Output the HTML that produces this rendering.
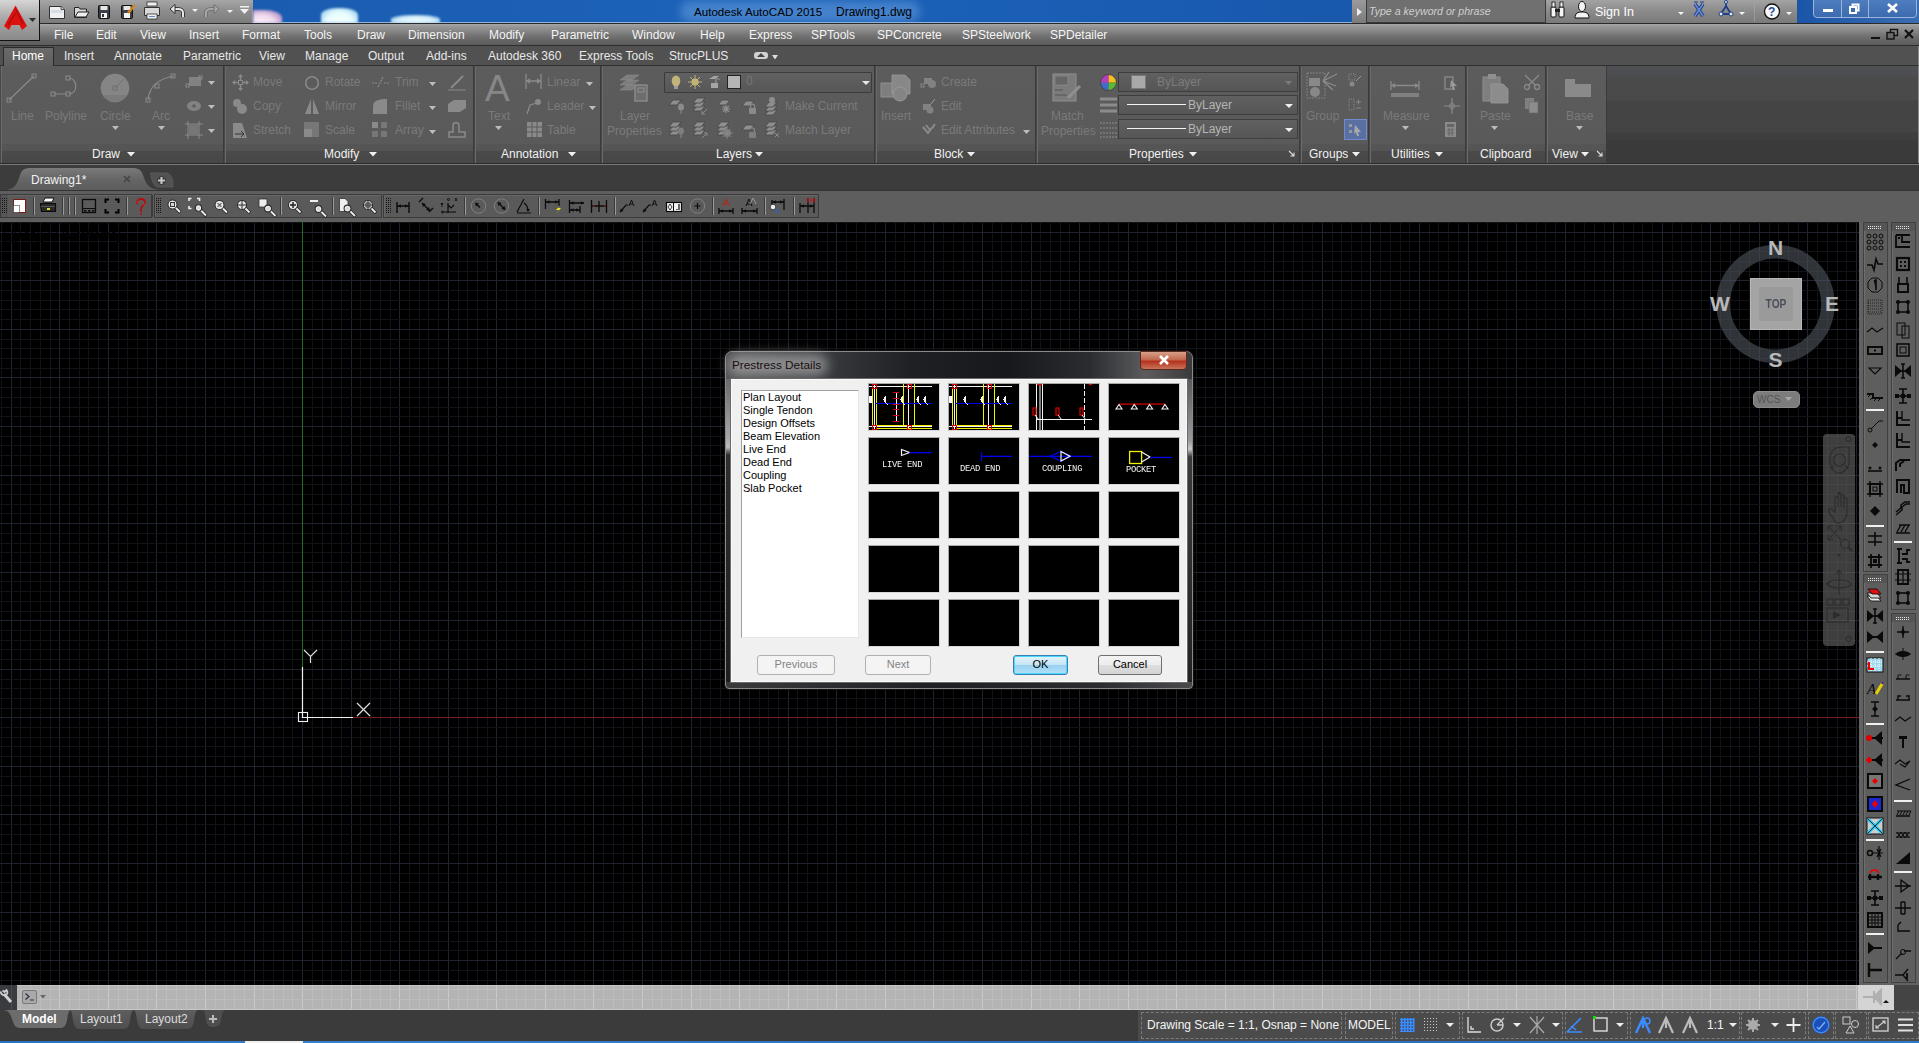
<!DOCTYPE html><html><head><meta charset="utf-8"><title>AutoCAD</title><style>
*{margin:0;padding:0;box-sizing:border-box}
html,body{width:1919px;height:1043px;overflow:hidden;background:#000}
body{position:relative;font-family:"Liberation Sans",sans-serif;font-size:12px;color:#fff}
.a{position:absolute}
.t{position:absolute;white-space:nowrap;line-height:1}
svg{position:absolute;overflow:visible}
</style></head><body>
<svg style="left:0;top:222px" width="1859" height="763" shape-rendering="crispEdges"><rect x="1" y="0" width="1" height="763" fill="#111318"/><rect x="11" y="0" width="1" height="763" fill="#1f2330"/><rect x="20" y="0" width="1" height="763" fill="#111318"/><rect x="30" y="0" width="1" height="763" fill="#111318"/><rect x="40" y="0" width="1" height="763" fill="#111318"/><rect x="50" y="0" width="1" height="763" fill="#111318"/><rect x="59" y="0" width="1" height="763" fill="#1f2330"/><rect x="69" y="0" width="1" height="763" fill="#111318"/><rect x="79" y="0" width="1" height="763" fill="#111318"/><rect x="88" y="0" width="1" height="763" fill="#111318"/><rect x="98" y="0" width="1" height="763" fill="#111318"/><rect x="108" y="0" width="1" height="763" fill="#1f2330"/><rect x="118" y="0" width="1" height="763" fill="#111318"/><rect x="127" y="0" width="1" height="763" fill="#111318"/><rect x="137" y="0" width="1" height="763" fill="#111318"/><rect x="147" y="0" width="1" height="763" fill="#111318"/><rect x="156" y="0" width="1" height="763" fill="#1f2330"/><rect x="166" y="0" width="1" height="763" fill="#111318"/><rect x="176" y="0" width="1" height="763" fill="#111318"/><rect x="186" y="0" width="1" height="763" fill="#111318"/><rect x="195" y="0" width="1" height="763" fill="#111318"/><rect x="205" y="0" width="1" height="763" fill="#1f2330"/><rect x="215" y="0" width="1" height="763" fill="#111318"/><rect x="224" y="0" width="1" height="763" fill="#111318"/><rect x="234" y="0" width="1" height="763" fill="#111318"/><rect x="244" y="0" width="1" height="763" fill="#111318"/><rect x="254" y="0" width="1" height="763" fill="#1f2330"/><rect x="263" y="0" width="1" height="763" fill="#111318"/><rect x="273" y="0" width="1" height="763" fill="#111318"/><rect x="283" y="0" width="1" height="763" fill="#111318"/><rect x="292" y="0" width="1" height="763" fill="#111318"/><rect x="302" y="0" width="1" height="763" fill="#1f2330"/><rect x="312" y="0" width="1" height="763" fill="#111318"/><rect x="322" y="0" width="1" height="763" fill="#111318"/><rect x="331" y="0" width="1" height="763" fill="#111318"/><rect x="341" y="0" width="1" height="763" fill="#111318"/><rect x="351" y="0" width="1" height="763" fill="#1f2330"/><rect x="360" y="0" width="1" height="763" fill="#111318"/><rect x="370" y="0" width="1" height="763" fill="#111318"/><rect x="380" y="0" width="1" height="763" fill="#111318"/><rect x="390" y="0" width="1" height="763" fill="#111318"/><rect x="399" y="0" width="1" height="763" fill="#1f2330"/><rect x="409" y="0" width="1" height="763" fill="#111318"/><rect x="419" y="0" width="1" height="763" fill="#111318"/><rect x="428" y="0" width="1" height="763" fill="#111318"/><rect x="438" y="0" width="1" height="763" fill="#111318"/><rect x="448" y="0" width="1" height="763" fill="#1f2330"/><rect x="458" y="0" width="1" height="763" fill="#111318"/><rect x="467" y="0" width="1" height="763" fill="#111318"/><rect x="477" y="0" width="1" height="763" fill="#111318"/><rect x="487" y="0" width="1" height="763" fill="#111318"/><rect x="496" y="0" width="1" height="763" fill="#1f2330"/><rect x="506" y="0" width="1" height="763" fill="#111318"/><rect x="516" y="0" width="1" height="763" fill="#111318"/><rect x="525" y="0" width="1" height="763" fill="#111318"/><rect x="535" y="0" width="1" height="763" fill="#111318"/><rect x="545" y="0" width="1" height="763" fill="#1f2330"/><rect x="555" y="0" width="1" height="763" fill="#111318"/><rect x="564" y="0" width="1" height="763" fill="#111318"/><rect x="574" y="0" width="1" height="763" fill="#111318"/><rect x="584" y="0" width="1" height="763" fill="#111318"/><rect x="593" y="0" width="1" height="763" fill="#1f2330"/><rect x="603" y="0" width="1" height="763" fill="#111318"/><rect x="613" y="0" width="1" height="763" fill="#111318"/><rect x="623" y="0" width="1" height="763" fill="#111318"/><rect x="632" y="0" width="1" height="763" fill="#111318"/><rect x="642" y="0" width="1" height="763" fill="#1f2330"/><rect x="652" y="0" width="1" height="763" fill="#111318"/><rect x="661" y="0" width="1" height="763" fill="#111318"/><rect x="671" y="0" width="1" height="763" fill="#111318"/><rect x="681" y="0" width="1" height="763" fill="#111318"/><rect x="691" y="0" width="1" height="763" fill="#1f2330"/><rect x="700" y="0" width="1" height="763" fill="#111318"/><rect x="710" y="0" width="1" height="763" fill="#111318"/><rect x="720" y="0" width="1" height="763" fill="#111318"/><rect x="729" y="0" width="1" height="763" fill="#111318"/><rect x="739" y="0" width="1" height="763" fill="#1f2330"/><rect x="749" y="0" width="1" height="763" fill="#111318"/><rect x="759" y="0" width="1" height="763" fill="#111318"/><rect x="768" y="0" width="1" height="763" fill="#111318"/><rect x="778" y="0" width="1" height="763" fill="#111318"/><rect x="788" y="0" width="1" height="763" fill="#1f2330"/><rect x="797" y="0" width="1" height="763" fill="#111318"/><rect x="807" y="0" width="1" height="763" fill="#111318"/><rect x="817" y="0" width="1" height="763" fill="#111318"/><rect x="827" y="0" width="1" height="763" fill="#111318"/><rect x="836" y="0" width="1" height="763" fill="#1f2330"/><rect x="846" y="0" width="1" height="763" fill="#111318"/><rect x="856" y="0" width="1" height="763" fill="#111318"/><rect x="865" y="0" width="1" height="763" fill="#111318"/><rect x="875" y="0" width="1" height="763" fill="#111318"/><rect x="885" y="0" width="1" height="763" fill="#1f2330"/><rect x="895" y="0" width="1" height="763" fill="#111318"/><rect x="904" y="0" width="1" height="763" fill="#111318"/><rect x="914" y="0" width="1" height="763" fill="#111318"/><rect x="924" y="0" width="1" height="763" fill="#111318"/><rect x="933" y="0" width="1" height="763" fill="#1f2330"/><rect x="943" y="0" width="1" height="763" fill="#111318"/><rect x="953" y="0" width="1" height="763" fill="#111318"/><rect x="963" y="0" width="1" height="763" fill="#111318"/><rect x="972" y="0" width="1" height="763" fill="#111318"/><rect x="982" y="0" width="1" height="763" fill="#1f2330"/><rect x="992" y="0" width="1" height="763" fill="#111318"/><rect x="1001" y="0" width="1" height="763" fill="#111318"/><rect x="1011" y="0" width="1" height="763" fill="#111318"/><rect x="1021" y="0" width="1" height="763" fill="#111318"/><rect x="1031" y="0" width="1" height="763" fill="#1f2330"/><rect x="1040" y="0" width="1" height="763" fill="#111318"/><rect x="1050" y="0" width="1" height="763" fill="#111318"/><rect x="1060" y="0" width="1" height="763" fill="#111318"/><rect x="1069" y="0" width="1" height="763" fill="#111318"/><rect x="1079" y="0" width="1" height="763" fill="#1f2330"/><rect x="1089" y="0" width="1" height="763" fill="#111318"/><rect x="1099" y="0" width="1" height="763" fill="#111318"/><rect x="1108" y="0" width="1" height="763" fill="#111318"/><rect x="1118" y="0" width="1" height="763" fill="#111318"/><rect x="1128" y="0" width="1" height="763" fill="#1f2330"/><rect x="1137" y="0" width="1" height="763" fill="#111318"/><rect x="1147" y="0" width="1" height="763" fill="#111318"/><rect x="1157" y="0" width="1" height="763" fill="#111318"/><rect x="1166" y="0" width="1" height="763" fill="#111318"/><rect x="1176" y="0" width="1" height="763" fill="#1f2330"/><rect x="1186" y="0" width="1" height="763" fill="#111318"/><rect x="1196" y="0" width="1" height="763" fill="#111318"/><rect x="1205" y="0" width="1" height="763" fill="#111318"/><rect x="1215" y="0" width="1" height="763" fill="#111318"/><rect x="1225" y="0" width="1" height="763" fill="#1f2330"/><rect x="1234" y="0" width="1" height="763" fill="#111318"/><rect x="1244" y="0" width="1" height="763" fill="#111318"/><rect x="1254" y="0" width="1" height="763" fill="#111318"/><rect x="1264" y="0" width="1" height="763" fill="#111318"/><rect x="1273" y="0" width="1" height="763" fill="#1f2330"/><rect x="1283" y="0" width="1" height="763" fill="#111318"/><rect x="1293" y="0" width="1" height="763" fill="#111318"/><rect x="1302" y="0" width="1" height="763" fill="#111318"/><rect x="1312" y="0" width="1" height="763" fill="#111318"/><rect x="1322" y="0" width="1" height="763" fill="#1f2330"/><rect x="1332" y="0" width="1" height="763" fill="#111318"/><rect x="1341" y="0" width="1" height="763" fill="#111318"/><rect x="1351" y="0" width="1" height="763" fill="#111318"/><rect x="1361" y="0" width="1" height="763" fill="#111318"/><rect x="1370" y="0" width="1" height="763" fill="#1f2330"/><rect x="1380" y="0" width="1" height="763" fill="#111318"/><rect x="1390" y="0" width="1" height="763" fill="#111318"/><rect x="1400" y="0" width="1" height="763" fill="#111318"/><rect x="1409" y="0" width="1" height="763" fill="#111318"/><rect x="1419" y="0" width="1" height="763" fill="#1f2330"/><rect x="1429" y="0" width="1" height="763" fill="#111318"/><rect x="1438" y="0" width="1" height="763" fill="#111318"/><rect x="1448" y="0" width="1" height="763" fill="#111318"/><rect x="1458" y="0" width="1" height="763" fill="#111318"/><rect x="1468" y="0" width="1" height="763" fill="#1f2330"/><rect x="1477" y="0" width="1" height="763" fill="#111318"/><rect x="1487" y="0" width="1" height="763" fill="#111318"/><rect x="1497" y="0" width="1" height="763" fill="#111318"/><rect x="1506" y="0" width="1" height="763" fill="#111318"/><rect x="1516" y="0" width="1" height="763" fill="#1f2330"/><rect x="1526" y="0" width="1" height="763" fill="#111318"/><rect x="1536" y="0" width="1" height="763" fill="#111318"/><rect x="1545" y="0" width="1" height="763" fill="#111318"/><rect x="1555" y="0" width="1" height="763" fill="#111318"/><rect x="1565" y="0" width="1" height="763" fill="#1f2330"/><rect x="1574" y="0" width="1" height="763" fill="#111318"/><rect x="1584" y="0" width="1" height="763" fill="#111318"/><rect x="1594" y="0" width="1" height="763" fill="#111318"/><rect x="1604" y="0" width="1" height="763" fill="#111318"/><rect x="1613" y="0" width="1" height="763" fill="#1f2330"/><rect x="1623" y="0" width="1" height="763" fill="#111318"/><rect x="1633" y="0" width="1" height="763" fill="#111318"/><rect x="1642" y="0" width="1" height="763" fill="#111318"/><rect x="1652" y="0" width="1" height="763" fill="#111318"/><rect x="1662" y="0" width="1" height="763" fill="#1f2330"/><rect x="1672" y="0" width="1" height="763" fill="#111318"/><rect x="1681" y="0" width="1" height="763" fill="#111318"/><rect x="1691" y="0" width="1" height="763" fill="#111318"/><rect x="1701" y="0" width="1" height="763" fill="#111318"/><rect x="1710" y="0" width="1" height="763" fill="#1f2330"/><rect x="1720" y="0" width="1" height="763" fill="#111318"/><rect x="1730" y="0" width="1" height="763" fill="#111318"/><rect x="1739" y="0" width="1" height="763" fill="#111318"/><rect x="1749" y="0" width="1" height="763" fill="#111318"/><rect x="1759" y="0" width="1" height="763" fill="#1f2330"/><rect x="1769" y="0" width="1" height="763" fill="#111318"/><rect x="1778" y="0" width="1" height="763" fill="#111318"/><rect x="1788" y="0" width="1" height="763" fill="#111318"/><rect x="1798" y="0" width="1" height="763" fill="#111318"/><rect x="1807" y="0" width="1" height="763" fill="#1f2330"/><rect x="1817" y="0" width="1" height="763" fill="#111318"/><rect x="1827" y="0" width="1" height="763" fill="#111318"/><rect x="1837" y="0" width="1" height="763" fill="#111318"/><rect x="1846" y="0" width="1" height="763" fill="#111318"/><rect x="1856" y="0" width="1" height="763" fill="#1f2330"/><rect x="0" y="0" width="1859" height="1" fill="#111318"/><rect x="0" y="10" width="1859" height="1" fill="#1f2330"/><rect x="0" y="19" width="1859" height="1" fill="#111318"/><rect x="0" y="29" width="1859" height="1" fill="#111318"/><rect x="0" y="39" width="1859" height="1" fill="#111318"/><rect x="0" y="49" width="1859" height="1" fill="#111318"/><rect x="0" y="58" width="1859" height="1" fill="#1f2330"/><rect x="0" y="68" width="1859" height="1" fill="#111318"/><rect x="0" y="78" width="1859" height="1" fill="#111318"/><rect x="0" y="87" width="1859" height="1" fill="#111318"/><rect x="0" y="97" width="1859" height="1" fill="#111318"/><rect x="0" y="107" width="1859" height="1" fill="#1f2330"/><rect x="0" y="117" width="1859" height="1" fill="#111318"/><rect x="0" y="126" width="1859" height="1" fill="#111318"/><rect x="0" y="136" width="1859" height="1" fill="#111318"/><rect x="0" y="146" width="1859" height="1" fill="#111318"/><rect x="0" y="155" width="1859" height="1" fill="#1f2330"/><rect x="0" y="165" width="1859" height="1" fill="#111318"/><rect x="0" y="175" width="1859" height="1" fill="#111318"/><rect x="0" y="185" width="1859" height="1" fill="#111318"/><rect x="0" y="194" width="1859" height="1" fill="#111318"/><rect x="0" y="204" width="1859" height="1" fill="#1f2330"/><rect x="0" y="214" width="1859" height="1" fill="#111318"/><rect x="0" y="223" width="1859" height="1" fill="#111318"/><rect x="0" y="233" width="1859" height="1" fill="#111318"/><rect x="0" y="243" width="1859" height="1" fill="#111318"/><rect x="0" y="253" width="1859" height="1" fill="#1f2330"/><rect x="0" y="262" width="1859" height="1" fill="#111318"/><rect x="0" y="272" width="1859" height="1" fill="#111318"/><rect x="0" y="282" width="1859" height="1" fill="#111318"/><rect x="0" y="291" width="1859" height="1" fill="#111318"/><rect x="0" y="301" width="1859" height="1" fill="#1f2330"/><rect x="0" y="311" width="1859" height="1" fill="#111318"/><rect x="0" y="321" width="1859" height="1" fill="#111318"/><rect x="0" y="330" width="1859" height="1" fill="#111318"/><rect x="0" y="340" width="1859" height="1" fill="#111318"/><rect x="0" y="350" width="1859" height="1" fill="#1f2330"/><rect x="0" y="359" width="1859" height="1" fill="#111318"/><rect x="0" y="369" width="1859" height="1" fill="#111318"/><rect x="0" y="379" width="1859" height="1" fill="#111318"/><rect x="0" y="389" width="1859" height="1" fill="#111318"/><rect x="0" y="398" width="1859" height="1" fill="#1f2330"/><rect x="0" y="408" width="1859" height="1" fill="#111318"/><rect x="0" y="418" width="1859" height="1" fill="#111318"/><rect x="0" y="427" width="1859" height="1" fill="#111318"/><rect x="0" y="437" width="1859" height="1" fill="#111318"/><rect x="0" y="447" width="1859" height="1" fill="#1f2330"/><rect x="0" y="457" width="1859" height="1" fill="#111318"/><rect x="0" y="466" width="1859" height="1" fill="#111318"/><rect x="0" y="476" width="1859" height="1" fill="#111318"/><rect x="0" y="486" width="1859" height="1" fill="#111318"/><rect x="0" y="495" width="1859" height="1" fill="#1f2330"/><rect x="0" y="505" width="1859" height="1" fill="#111318"/><rect x="0" y="515" width="1859" height="1" fill="#111318"/><rect x="0" y="524" width="1859" height="1" fill="#111318"/><rect x="0" y="534" width="1859" height="1" fill="#111318"/><rect x="0" y="544" width="1859" height="1" fill="#1f2330"/><rect x="0" y="554" width="1859" height="1" fill="#111318"/><rect x="0" y="563" width="1859" height="1" fill="#111318"/><rect x="0" y="573" width="1859" height="1" fill="#111318"/><rect x="0" y="583" width="1859" height="1" fill="#111318"/><rect x="0" y="592" width="1859" height="1" fill="#1f2330"/><rect x="0" y="602" width="1859" height="1" fill="#111318"/><rect x="0" y="612" width="1859" height="1" fill="#111318"/><rect x="0" y="622" width="1859" height="1" fill="#111318"/><rect x="0" y="631" width="1859" height="1" fill="#111318"/><rect x="0" y="641" width="1859" height="1" fill="#1f2330"/><rect x="0" y="651" width="1859" height="1" fill="#111318"/><rect x="0" y="660" width="1859" height="1" fill="#111318"/><rect x="0" y="670" width="1859" height="1" fill="#111318"/><rect x="0" y="680" width="1859" height="1" fill="#111318"/><rect x="0" y="690" width="1859" height="1" fill="#1f2330"/><rect x="0" y="699" width="1859" height="1" fill="#111318"/><rect x="0" y="709" width="1859" height="1" fill="#111318"/><rect x="0" y="719" width="1859" height="1" fill="#111318"/><rect x="0" y="728" width="1859" height="1" fill="#111318"/><rect x="0" y="738" width="1859" height="1" fill="#1f2330"/><rect x="0" y="748" width="1859" height="1" fill="#111318"/><rect x="0" y="758" width="1859" height="1" fill="#111318"/><rect x="302" y="0" width="1" height="495" fill="#1f6e1f"/><rect x="302" y="495" width="1557" height="1" fill="#7a1a1a"/></svg>
<div class="t" style="left:3px;top:229px;font-size:12px;color:#000">[-][Top][2D Wireframe]</div>
<svg style="left:290px;top:640px" width="90" height="90"><path d="M12.5 27V77.5H63" stroke="#f0f0f0" stroke-width="1.2" fill="none"/><rect x="8.5" y="72.5" width="9" height="9" fill="none" stroke="#f0f0f0" stroke-width="1.1"/><path d="M14 10L20.5 16.5L27 10M20.5 16.5V23" stroke="#e0e0e0" stroke-width="1.2" fill="none"/><path d="M67 63L80 76M80 63L67 76" stroke="#e0e0e0" stroke-width="1.2"/></svg>
<svg style="left:1700px;top:228px" width="152" height="152"><circle cx="75.5" cy="76" r="52.4" fill="none" stroke="rgba(78,82,90,.62)" stroke-width="13.6"/></svg>
<div class="a" style="left:1750px;top:278px;width:52px;height:52px;background:#a4a4a4;border:1px solid #b8b8b8"></div>
<div class="a" style="left:1759px;top:287px;width:34px;height:34px;background:#9a9a9a"></div>
<div class="t" style="left:1750px;top:298px;width:52px;text-align:center;font-size:12px;font-weight:bold;color:#4a4f5a;transform:scaleX(.85)">TOP</div>
<div class="t" style="left:1765.5px;top:236.5px;width:20px;text-align:center;font-size:21px;font-weight:bold;color:#b8b8b8">N</div>
<div class="t" style="left:1710px;top:292.5px;width:20px;text-align:center;font-size:21px;font-weight:bold;color:#b8b8b8">W</div>
<div class="t" style="left:1822px;top:292.5px;width:20px;text-align:center;font-size:21px;font-weight:bold;color:#b8b8b8">E</div>
<div class="t" style="left:1765.5px;top:348.5px;width:20px;text-align:center;font-size:21px;font-weight:bold;color:#b8b8b8">S</div>
<div class="a" style="left:1753px;top:391px;width:47px;height:17px;border-radius:5px;background:#7c7c7c;border:1px solid #8c8c8c"></div>
<div class="t" style="left:1757px;top:395px;font-size:10px;color:#555">WCS</div>
<svg style="left:1785px;top:397px" width="7" height="5"><path d="M0 0H7L3.5 4Z" fill="#a8a8a8"/></svg>
<div class="a" style="left:1823px;top:434px;width:32px;height:212px;border-radius:4px;background:rgba(100,100,100,.62)"></div>
<svg style="left:1823px;top:434px" width="32" height="212"><g fill="none" stroke="#262626" stroke-width="1.1" opacity=".75"><circle cx="25.5" cy="5" r="2.5"/><path d="M7 26C7 16 12 13 19 13H26V27C26 34 21 39 16 39C11 39 7 34 7 26Z"/><circle cx="16.5" cy="26" r="6"/><path d="M11 31L8 35M22 31L25 35"/><path d="M10 84C7 80 4 77 6 75C8 74 10 76 12 78V64C12 62 15 62 15 64V73V61C15 59 18 59 18 61V73V62C18 60 21 60 21 62V74V65C21 63 24 63 24 65V78C24 85 20 89 15 89C12 89 11 87 10 84Z"/><path d="M5 92L18 106M18 92L5 106M5 92V97M5 92H10M5 106V101M5 106H10M18 92H13M18 92V97"/><circle cx="22" cy="110" r="4.5"/><path d="M25 113L29 117" stroke-width="2"/><path d="M16 136V161M16 136L13 140M16 136L19 140"/><ellipse cx="16" cy="150" rx="12" ry="4"/><path d="M4 150L8 147M4 150L8 153"/><rect x="4" y="165" width="6" height="6"/><rect x="12" y="165" width="6" height="6"/><rect x="20" y="165" width="6" height="6"/><rect x="4" y="174" width="21" height="14"/><circle cx="25.5" cy="205" r="2.5"/></g><g fill="#262626" opacity=".75"><path d="M14 58L16 61L18 58Z"/><path d="M14 120L16 123L18 120Z"/><path d="M14 143L16 146L18 143Z" opacity="0"/><path d="M14 176L16 179L18 176Z" opacity="0"/><path d="M10 177L18 181L10 185Z"/><path d="M14 160L16 163L18 160Z" opacity="0"/></g></svg>
<div class="a" style="left:1859px;top:222px;width:60px;height:763px;background:#626262"></div>
<div class="a" style="left:1863px;top:222px;width:25px;height:350px;background:#5e5e5e;border:1px solid #404040;box-shadow:inset 1px 1px 0 #6e6e6e"></div>
<div class="a" style="left:1864px;top:223px;width:23px;height:8px;background:#555"></div>
<svg style="left:1868px;top:225px" width="16" height="5"><rect x="0" y="1" width="1" height="1" fill="#e8e8e8"/><rect x="0" y="3" width="1" height="1" fill="#e8e8e8"/><rect x="2" y="1" width="1" height="1" fill="#e8e8e8"/><rect x="2" y="3" width="1" height="1" fill="#e8e8e8"/><rect x="4" y="1" width="1" height="1" fill="#e8e8e8"/><rect x="4" y="3" width="1" height="1" fill="#e8e8e8"/><rect x="6" y="1" width="1" height="1" fill="#e8e8e8"/><rect x="6" y="3" width="1" height="1" fill="#e8e8e8"/><rect x="8" y="1" width="1" height="1" fill="#e8e8e8"/><rect x="8" y="3" width="1" height="1" fill="#e8e8e8"/><rect x="10" y="1" width="1" height="1" fill="#e8e8e8"/><rect x="10" y="3" width="1" height="1" fill="#e8e8e8"/><rect x="12" y="1" width="1" height="1" fill="#e8e8e8"/><rect x="12" y="3" width="1" height="1" fill="#e8e8e8"/></svg>
<div class="a" style="left:1863px;top:574px;width:25px;height:409px;background:#5e5e5e;border:1px solid #404040;box-shadow:inset 1px 1px 0 #6e6e6e"></div>
<div class="a" style="left:1864px;top:575px;width:23px;height:8px;background:#555"></div>
<svg style="left:1868px;top:577px" width="16" height="5"><rect x="0" y="1" width="1" height="1" fill="#e8e8e8"/><rect x="0" y="3" width="1" height="1" fill="#e8e8e8"/><rect x="2" y="1" width="1" height="1" fill="#e8e8e8"/><rect x="2" y="3" width="1" height="1" fill="#e8e8e8"/><rect x="4" y="1" width="1" height="1" fill="#e8e8e8"/><rect x="4" y="3" width="1" height="1" fill="#e8e8e8"/><rect x="6" y="1" width="1" height="1" fill="#e8e8e8"/><rect x="6" y="3" width="1" height="1" fill="#e8e8e8"/><rect x="8" y="1" width="1" height="1" fill="#e8e8e8"/><rect x="8" y="3" width="1" height="1" fill="#e8e8e8"/><rect x="10" y="1" width="1" height="1" fill="#e8e8e8"/><rect x="10" y="3" width="1" height="1" fill="#e8e8e8"/><rect x="12" y="1" width="1" height="1" fill="#e8e8e8"/><rect x="12" y="3" width="1" height="1" fill="#e8e8e8"/></svg>
<div class="a" style="left:1891px;top:222px;width:25px;height:388px;background:#5e5e5e;border:1px solid #404040;box-shadow:inset 1px 1px 0 #6e6e6e"></div>
<div class="a" style="left:1892px;top:223px;width:23px;height:8px;background:#555"></div>
<svg style="left:1896px;top:225px" width="16" height="5"><rect x="0" y="1" width="1" height="1" fill="#e8e8e8"/><rect x="0" y="3" width="1" height="1" fill="#e8e8e8"/><rect x="2" y="1" width="1" height="1" fill="#e8e8e8"/><rect x="2" y="3" width="1" height="1" fill="#e8e8e8"/><rect x="4" y="1" width="1" height="1" fill="#e8e8e8"/><rect x="4" y="3" width="1" height="1" fill="#e8e8e8"/><rect x="6" y="1" width="1" height="1" fill="#e8e8e8"/><rect x="6" y="3" width="1" height="1" fill="#e8e8e8"/><rect x="8" y="1" width="1" height="1" fill="#e8e8e8"/><rect x="8" y="3" width="1" height="1" fill="#e8e8e8"/><rect x="10" y="1" width="1" height="1" fill="#e8e8e8"/><rect x="10" y="3" width="1" height="1" fill="#e8e8e8"/><rect x="12" y="1" width="1" height="1" fill="#e8e8e8"/><rect x="12" y="3" width="1" height="1" fill="#e8e8e8"/></svg>
<div class="a" style="left:1891px;top:613px;width:25px;height:370px;background:#5e5e5e;border:1px solid #404040;box-shadow:inset 1px 1px 0 #6e6e6e"></div>
<div class="a" style="left:1892px;top:614px;width:23px;height:8px;background:#555"></div>
<svg style="left:1896px;top:616px" width="16" height="5"><rect x="0" y="1" width="1" height="1" fill="#e8e8e8"/><rect x="0" y="3" width="1" height="1" fill="#e8e8e8"/><rect x="2" y="1" width="1" height="1" fill="#e8e8e8"/><rect x="2" y="3" width="1" height="1" fill="#e8e8e8"/><rect x="4" y="1" width="1" height="1" fill="#e8e8e8"/><rect x="4" y="3" width="1" height="1" fill="#e8e8e8"/><rect x="6" y="1" width="1" height="1" fill="#e8e8e8"/><rect x="6" y="3" width="1" height="1" fill="#e8e8e8"/><rect x="8" y="1" width="1" height="1" fill="#e8e8e8"/><rect x="8" y="3" width="1" height="1" fill="#e8e8e8"/><rect x="10" y="1" width="1" height="1" fill="#e8e8e8"/><rect x="10" y="3" width="1" height="1" fill="#e8e8e8"/><rect x="12" y="1" width="1" height="1" fill="#e8e8e8"/><rect x="12" y="3" width="1" height="1" fill="#e8e8e8"/></svg>
<svg style="left:1865px;top:232px" width="20" height="20"><circle cx="4" cy="4" r="2" fill="none" stroke="#0a0a0a" stroke-width="1"/><circle cx="4" cy="10" r="2" fill="none" stroke="#0a0a0a" stroke-width="1"/><circle cx="4" cy="16" r="2" fill="none" stroke="#0a0a0a" stroke-width="1"/><circle cx="10" cy="4" r="2" fill="none" stroke="#0a0a0a" stroke-width="1"/><circle cx="10" cy="10" r="2" fill="none" stroke="#0a0a0a" stroke-width="1"/><circle cx="10" cy="16" r="2" fill="none" stroke="#0a0a0a" stroke-width="1"/><circle cx="16" cy="4" r="2" fill="none" stroke="#0a0a0a" stroke-width="1"/><circle cx="16" cy="10" r="2" fill="none" stroke="#0a0a0a" stroke-width="1"/><circle cx="16" cy="16" r="2" fill="none" stroke="#0a0a0a" stroke-width="1"/></svg>
<svg style="left:1865px;top:254px" width="20" height="20"><path d="M2 11H7L9 16L11 5L13 10H18" stroke="#0a0a0a" stroke-width="1.6" fill="none"/></svg>
<svg style="left:1865px;top:275px" width="20" height="20"><path d="M7 3H13L17 7V13L13 17H7L3 13V7Z" fill="none" stroke="#0a0a0a"/><path d="M9 6L11 5V15" stroke="#0a0a0a" stroke-width="1.6"/></svg>
<svg style="left:1865px;top:297px" width="20" height="20"><rect x="3" y="3" width="14" height="14" fill="none" stroke="#0a0a0a" stroke-dasharray="1 1" opacity=".7"/><path d="M3 6H17M3 9H17M3 12H17M3 15H17" stroke="#0a0a0a" stroke-dasharray="1 1" opacity=".7"/></svg>
<svg style="left:1865px;top:320px" width="20" height="20"><path d="M2 12L7 8L12 12L18 8" stroke="#0a0a0a" stroke-width="1.2" fill="none"/></svg>
<svg style="left:1865px;top:340px" width="20" height="20"><rect x="3" y="7" width="14" height="7" fill="none" stroke="#0a0a0a" stroke-width="2"/><rect x="9" y="9.5" width="2" height="2" fill="#0a0a0a"/></svg>
<svg style="left:1865px;top:361px" width="20" height="20"><path d="M4 7H16L10 13Z" fill="none" stroke="#0a0a0a" stroke-width="1.2"/></svg>
<svg style="left:1865px;top:387px" width="20" height="20"><path d="M2 7H8V11H18" stroke="#0a0a0a" stroke-width="2" fill="none"/><path d="M3 10L5 8M5 13L8 10M9 14L12 11M13 14L16 11" stroke="#0a0a0a"/></svg>
<div class="a" style="left:1866px;top:409px;width:18px;height:2px;background:#f0f0f0"></div>
<svg style="left:1865px;top:415px" width="20" height="20"><circle cx="5" cy="15" r="2" fill="none" stroke="#0a0a0a"/><path d="M6 14L14 6H18" stroke="#0a0a0a" fill="none"/></svg>
<svg style="left:1865px;top:435px" width="20" height="20"><path d="M10 7L13 10L10 13L7 10Z" fill="#0a0a0a"/></svg>
<svg style="left:1865px;top:458px" width="20" height="20"><path d="M3 13H17" stroke="#0a0a0a" stroke-width="1.6"/><circle cx="5" cy="10" r="1.5" fill="#0a0a0a"/><circle cx="15" cy="10" r="1.5" fill="#0a0a0a"/></svg>
<svg style="left:1865px;top:479px" width="20" height="20"><rect x="5" y="5" width="10" height="10" fill="none" stroke="#0a0a0a" stroke-width="2"/><path d="M2 5H18M2 15H18M5 2V18M15 2V18" stroke="#0a0a0a" stroke-width="1.4"/><rect x="8" y="8" width="4" height="4" fill="none" stroke="#0a0a0a"/></svg>
<svg style="left:1865px;top:501px" width="20" height="20"><path d="M10 5L15 10L10 15L5 10Z" fill="#0a0a0a"/></svg>
<div class="a" style="left:1866px;top:525px;width:18px;height:2px;background:#f0f0f0"></div>
<svg style="left:1865px;top:529px" width="20" height="20"><path d="M3 7H17M3 13H17M10 3V17" stroke="#0a0a0a" stroke-width="1.6"/></svg>
<svg style="left:1865px;top:551px" width="20" height="20"><path d="M3 6H17M3 14H17M6 3V17M14 3V17" stroke="#0a0a0a" stroke-width="1.8"/><rect x="8" y="8" width="4" height="4" fill="#0a0a0a"/></svg>
<svg style="left:1865px;top:585px" width="20" height="20"><path d="M2 11H12L16 16H6Z" fill="#f0f0f0" stroke="#111" stroke-width=".9"/><path d="M2 8H12L16 13H6Z" fill="#d8d8d8" stroke="#111" stroke-width=".9"/><path d="M3 4H12L16 9H7Z" fill="#e01010" stroke="#111" stroke-width=".9"/></svg>
<svg style="left:1865px;top:606px" width="20" height="20"><path d="M2 4L9 10L2 16ZM18 4L11 10L18 16Z" fill="#0a0a0a"/><path d="M2 10H18M10 3V17M8 3H12M8 17H12" stroke="#0a0a0a" stroke-width="1.6"/></svg>
<svg style="left:1865px;top:627px" width="20" height="20"><path d="M2 4L8 9H12L18 4V16L12 11H8L2 16Z" fill="#0a0a0a"/></svg>
<div class="a" style="left:1866px;top:651px;width:18px;height:2px;background:#f0f0f0"></div>
<svg style="left:1865px;top:655px" width="20" height="20"><rect x="2" y="3" width="16" height="14" fill="#9fd6f0" stroke="#111"/><path d="M2 7H18M2 11H18M6 3V17M10 3V17M14 3V17" stroke="#fff" stroke-dasharray="1 1"/><path d="M4 7V14H9" stroke="#e00" stroke-width="2" fill="none"/></svg>
<svg style="left:1865px;top:678px" width="20" height="20"><text x="2" y="16" font-family="Liberation Serif" font-size="15" font-style="italic" fill="#0a0a0a">A</text><path d="M11 16L17 6" stroke="#e8d000" stroke-width="3"/><path d="M17 6L18 4" stroke="#609"/></svg>
<svg style="left:1865px;top:699px" width="20" height="20"><path d="M6 3H14M10 3V17M6 17H14" stroke="#0a0a0a" stroke-width="1.4"/><path d="M10 7L13 10L10 13L7 10Z" fill="#0a0a0a"/></svg>
<div class="a" style="left:1866px;top:723px;width:18px;height:2px;background:#f0f0f0"></div>
<svg style="left:1865px;top:728px" width="20" height="20"><path d="M9 10L17 3V17Z" fill="#0a0a0a"/><path d="M6 10H18" stroke="#0a0a0a" stroke-width="2"/><circle cx="4" cy="10" r="3" fill="#e00000"/></svg>
<svg style="left:1865px;top:750px" width="20" height="20"><path d="M9 10L17 3V17Z" fill="#0a0a0a"/><path d="M6 10H18" stroke="#0a0a0a" stroke-width="2"/><path d="M1 10H7M4 7V13" stroke="#e00000" stroke-width="2.6"/></svg>
<svg style="left:1865px;top:771px" width="20" height="20"><rect x="3" y="3" width="14" height="14" fill="#777" stroke="#0a0a0a" stroke-width="2"/><path d="M10 7L13 10L10 13L7 10Z" fill="#e00"/></svg>
<svg style="left:1865px;top:794px" width="20" height="20"><rect x="3" y="3" width="14" height="14" fill="#1a2ad0" stroke="#0a0a0a" stroke-width="2"/><path d="M10 6L13 10L10 14L7 10Z" fill="#e00"/></svg>
<svg style="left:1865px;top:816px" width="20" height="20"><rect x="2" y="2" width="16" height="16" fill="#ccc" stroke="#111"/><path d="M3 3L17 17M17 3L3 17" stroke="#22c8f0" stroke-width="3"/><path d="M3 3L17 17M17 3L3 17" stroke="#111" stroke-width=".8"/></svg>
<div class="a" style="left:1866px;top:839px;width:18px;height:2px;background:#f0f0f0"></div>
<svg style="left:1865px;top:843px" width="20" height="20"><circle cx="5" cy="10" r="2.5" fill="none" stroke="#0a0a0a" stroke-width="1.5"/><path d="M7 10H18M14 3V17M12 6L16 14M16 6L12 14" stroke="#0a0a0a" stroke-width="1.2"/></svg>
<svg style="left:1865px;top:865px" width="20" height="20"><path d="M3 12H17M5 9V15M13 9V15" stroke="#0a0a0a" stroke-width="2.4"/><path d="M5 8C7 4 12 4 14 8" stroke="#e00" stroke-width="1.4" fill="none"/></svg>
<svg style="left:1865px;top:888px" width="20" height="20"><path d="M2 10H18M10 3V17M6 3H14M6 17H14" stroke="#0a0a0a" stroke-width="1.6"/><path d="M2 8H6V12H2ZM14 8H18V12H14Z" fill="#0a0a0a"/><circle cx="10" cy="10" r="2.5" fill="#0a0a0a"/></svg>
<svg style="left:1865px;top:910px" width="20" height="20"><rect x="3" y="3" width="14" height="14" fill="none" stroke="#0a0a0a" stroke-width="2"/><path d="M3 7H17M3 10H17M3 13H17M7 3V17M10 3V17M13 3V17" stroke="#0a0a0a" stroke-width="1"/></svg>
<div class="a" style="left:1866px;top:933px;width:18px;height:2px;background:#f0f0f0"></div>
<svg style="left:1865px;top:938px" width="20" height="20"><path d="M3 4L10 10L3 16Z" fill="#0a0a0a"/><path d="M8 10H17" stroke="#0a0a0a" stroke-width="2"/></svg>
<svg style="left:1865px;top:960px" width="20" height="20"><path d="M4 3V17M4 10H17" stroke="#0a0a0a" stroke-width="2.4"/></svg>
<svg style="left:1893px;top:232px" width="20" height="20"><path d="M3 3H17M3 3V15H17M9 3V10H17" stroke="#0a0a0a" stroke-width="1.8" fill="none"/><rect x="5" y="5" width="2" height="2" fill="#0a0a0a"/></svg>
<svg style="left:1893px;top:254px" width="20" height="20"><rect x="4" y="4" width="12" height="12" fill="none" stroke="#0a0a0a" stroke-width="2.2"/><rect x="7" y="7" width="2" height="2" fill="#0a0a0a"/><rect x="11" y="7" width="2" height="2" fill="#0a0a0a"/><rect x="7" y="11" width="2" height="2" fill="#0a0a0a"/><rect x="11" y="11" width="2" height="2" fill="#0a0a0a"/></svg>
<svg style="left:1893px;top:275px" width="20" height="20"><path d="M6 2V8M14 2V8" stroke="#0a0a0a" stroke-width="1.6"/><rect x="5" y="9" width="10" height="8" fill="none" stroke="#0a0a0a" stroke-width="2"/></svg>
<svg style="left:1893px;top:297px" width="20" height="20"><rect x="5" y="5" width="10" height="10" fill="none" stroke="#0a0a0a" stroke-width="1.6"/><circle cx="5" cy="5" r="2" fill="#0a0a0a"/><circle cx="15" cy="5" r="2" fill="#0a0a0a"/><circle cx="5" cy="15" r="2" fill="#0a0a0a"/><circle cx="15" cy="15" r="2" fill="#0a0a0a"/></svg>
<svg style="left:1893px;top:320px" width="20" height="20"><rect x="4" y="3" width="8" height="12" fill="none" stroke="#0a0a0a"/><rect x="9" y="6" width="7" height="12" fill="none" stroke="#0a0a0a"/></svg>
<svg style="left:1893px;top:340px" width="20" height="20"><rect x="4" y="4" width="12" height="12" fill="none" stroke="#0a0a0a" stroke-width="1.6"/><rect x="7" y="7" width="6" height="6" fill="none" stroke="#0a0a0a"/></svg>
<svg style="left:1893px;top:361px" width="20" height="20"><path d="M2 4L9 10L2 16ZM18 4L11 10L18 16Z" fill="#0a0a0a"/><path d="M2 10H18M10 3V17M8 3H12M8 17H12" stroke="#0a0a0a" stroke-width="1.6"/></svg>
<svg style="left:1893px;top:386px" width="20" height="20"><path d="M2 10H18M10 3V17M6 3H14M6 17H14" stroke="#0a0a0a" stroke-width="1.6"/><path d="M2 8H6V12H2ZM14 8H18V12H14Z" fill="#0a0a0a"/><circle cx="10" cy="10" r="2.5" fill="#0a0a0a"/></svg>
<svg style="left:1893px;top:408px" width="20" height="20"><path d="M4 3V17H17M4 10H9" stroke="#0a0a0a" stroke-width="2" fill="none"/><path d="M9 3V12H17" stroke="#0a0a0a" stroke-width="1.4" fill="none"/></svg>
<svg style="left:1893px;top:430px" width="20" height="20"><path d="M4 3V17H17M4 10H9" stroke="#0a0a0a" stroke-width="2" fill="none"/><path d="M9 3V12H17" stroke="#0a0a0a" stroke-width="1.4" fill="none"/></svg>
<svg style="left:1893px;top:454px" width="20" height="20"><path d="M3 17V9L7 6H17M7 13V10L11 7" stroke="#0a0a0a" stroke-width="2" fill="none"/></svg>
<svg style="left:1893px;top:476px" width="20" height="20"><path d="M4 17V4H16V17H11V9H8V17" stroke="#0a0a0a" stroke-width="2" fill="none"/></svg>
<svg style="left:1893px;top:497px" width="20" height="20"><path d="M3 15L8 11V8L12 5H17M3 18L9 13V10L13 7H17" stroke="#0a0a0a" stroke-width="1.5" fill="none"/></svg>
<svg style="left:1893px;top:518px" width="20" height="20"><path d="M3 15H17M4 14L8 7M8 14L12 7M12 14L16 7M6 7H17" stroke="#0a0a0a" stroke-width="1.4" fill="none"/></svg>
<div class="a" style="left:1894px;top:541px;width:18px;height:2px;background:#f0f0f0"></div>
<svg style="left:1893px;top:546px" width="20" height="20"><path d="M4 3H9M6 3V17M4 17H9M9 8H14V4H17M9 13H14V16H17" stroke="#0a0a0a" stroke-width="1.8" fill="none"/></svg>
<svg style="left:1893px;top:567px" width="20" height="20"><rect x="5" y="3" width="10" height="14" fill="none" stroke="#0a0a0a" stroke-width="2"/><path d="M2 7H18M2 13H18M10 3V17" stroke="#0a0a0a" stroke-width="1.2"/></svg>
<svg style="left:1893px;top:588px" width="20" height="20"><rect x="5" y="5" width="10" height="10" fill="none" stroke="#0a0a0a" stroke-width="1.6"/><circle cx="5" cy="5" r="2" fill="#0a0a0a"/><circle cx="15" cy="5" r="2" fill="#0a0a0a"/><circle cx="5" cy="15" r="2" fill="#0a0a0a"/><circle cx="15" cy="15" r="2" fill="#0a0a0a"/></svg>
<svg style="left:1893px;top:622px" width="20" height="20"><path d="M10 4V16M4 10H16" stroke="#0a0a0a" stroke-width="1.4"/><path d="M10 6L12 10L10 14L8 10Z" fill="#0a0a0a"/></svg>
<svg style="left:1893px;top:644px" width="20" height="20"><ellipse cx="10" cy="10" rx="7" ry="3" fill="#0a0a0a"/><path d="M10 4V16M2 10H18" stroke="#0a0a0a"/></svg>
<svg style="left:1893px;top:665px" width="20" height="20"><path d="M3 14H17" stroke="#0a0a0a" stroke-width="1.4"/><path d="M5 14V11C5 9 8 9 8 11M13 14V11C13 9 16 9 16 11" stroke="#0a0a0a" fill="none"/></svg>
<svg style="left:1893px;top:687px" width="20" height="20"><path d="M3 13H17M5 13V9H8M13 9H16V13" stroke="#0a0a0a" stroke-width="1.4" fill="none"/></svg>
<svg style="left:1893px;top:709px" width="20" height="20"><path d="M2 12L7 8L12 12L18 8" stroke="#0a0a0a" stroke-width="1.2" fill="none"/></svg>
<svg style="left:1893px;top:731px" width="20" height="20"><path d="M6 5H14V8H11V17H9V8H6Z" fill="#0a0a0a"/></svg>
<svg style="left:1893px;top:753px" width="20" height="20"><path d="M2 11L7 7L12 11L17 8L12 14L7 11" stroke="#0a0a0a" stroke-width="1.1" fill="none"/></svg>
<svg style="left:1893px;top:774px" width="20" height="20"><path d="M17 5L3 11L17 16" stroke="#0a0a0a" stroke-width="1.3" fill="none"/></svg>
<div class="a" style="left:1894px;top:800px;width:18px;height:2px;background:#f0f0f0"></div>
<svg style="left:1893px;top:803px" width="20" height="20"><path d="M3 13H17" stroke="#0a0a0a" stroke-width="1.5"/><path d="M4 12L6 8M7 12L9 8M10 12L12 8M13 12L15 8M16 12L18 8M4 8H18" stroke="#0a0a0a" stroke-width="1"/></svg>
<svg style="left:1893px;top:825px" width="20" height="20"><path d="M3 8H17M3 12H17M4 13L8 7L12 13L16 7M4 7L8 13L12 7L16 13" stroke="#0a0a0a" stroke-width="1" fill="none"/></svg>
<svg style="left:1893px;top:848px" width="20" height="20"><path d="M3 16H17V4Z" fill="#0a0a0a"/></svg>
<div class="a" style="left:1894px;top:871px;width:18px;height:2px;background:#f0f0f0"></div>
<svg style="left:1893px;top:876px" width="20" height="20"><path d="M2 10H18M8 4V16L16 10Z" stroke="#0a0a0a" stroke-width="1.3" fill="none"/></svg>
<svg style="left:1893px;top:898px" width="20" height="20"><path d="M2 10H18M8 4V16M12 4V16M8 4H12M8 16H12" stroke="#0a0a0a" stroke-width="1.4" fill="none"/></svg>
<svg style="left:1893px;top:917px" width="20" height="20"><path d="M5 8V14H17M5 8L8 5" stroke="#0a0a0a" stroke-width="1.4" fill="none"/></svg>
<svg style="left:1893px;top:942px" width="20" height="20"><path d="M3 17L9 11M11 9H18" stroke="#0a0a0a" stroke-width="1.3"/><circle cx="10" cy="10" r="2.5" fill="none" stroke="#0a0a0a"/></svg>
<svg style="left:1893px;top:964px" width="20" height="20"><path d="M2 11H10L15 5M10 11L15 17" stroke="#0a0a0a" stroke-width="1.3" fill="none"/><path d="M14 9V15" stroke="#0a0a0a" stroke-width="1.8"/></svg>
<div class="a" style="left:725px;top:351px;width:468px;height:338px;border-radius:7px 7px 4px 4px;background:linear-gradient(90deg,#3a3a3c,#1e2024 45%,#2a2c30 80%,#4a4a4c);border:1px solid #8a8a8a;box-shadow:0 0 0 1px #111"></div>
<div class="a" style="left:726px;top:352px;width:466px;height:27px;border-radius:6px 6px 0 0;background:linear-gradient(90deg,#505052 0%,#3c3e42 18%,#1e2024 40%,#16181c 60%,#2a2c30 78%,#5c5c5e 90%,#3a3a3c 100%)"></div>
<div class="a" style="left:728px;top:354px;width:100px;height:22px;border-radius:11px;background:rgba(200,200,200,.55);filter:blur(6px)"></div>
<div class="t" style="left:732px;top:360px;font-size:11.8px;color:#1a0e0e">Prestress Details</div>
<div class="a" style="left:1187px;top:379px;width:5px;height:303px;background:linear-gradient(#5a5a5c 0,#9a9a9c 62px,#c8c8c8 70px,#3a3a3a 78px,#222 100%)"></div>
<div class="a" style="left:726px;top:379px;width:5px;height:303px;background:linear-gradient(#6a6a6c 0,#a8a8aa 60px,#bcbcbc 68px,#2e2e2e 76px,#1e1e1e 100%)"></div>
<div class="a" style="left:1140px;top:351px;width:47px;height:19px;border-radius:0 0 4px 4px;background:linear-gradient(#d9a08a,#c06a50 45%,#b8321e 55%,#c8745a);border:1px solid #5a2a20"></div>
<svg style="left:1158px;top:355px" width="12" height="10"><path d="M2 1L10 9M10 1L2 9" stroke="#fff" stroke-width="2.6"/></svg>
<div class="a" style="left:731px;top:379px;width:456px;height:303px;background:#f0f0f0;border:1px solid #fafafa;box-shadow:0 0 0 1px #6a6a6a"></div>
<div class="a" style="left:741px;top:390px;width:118px;height:248px;background:#fff;border:1px solid #a0a0a0;border-right-color:#e8e8e8;border-bottom-color:#e8e8e8"></div>
<div class="t" style="left:743px;top:392px;font-size:11px;color:#000">Plan Layout</div>
<div class="t" style="left:743px;top:405px;font-size:11px;color:#000">Single Tendon</div>
<div class="t" style="left:743px;top:418px;font-size:11px;color:#000">Design Offsets</div>
<div class="t" style="left:743px;top:431px;font-size:11px;color:#000">Beam Elevation</div>
<div class="t" style="left:743px;top:444px;font-size:11px;color:#000">Live End</div>
<div class="t" style="left:743px;top:457px;font-size:11px;color:#000">Dead End</div>
<div class="t" style="left:743px;top:470px;font-size:11px;color:#000">Coupling</div>
<div class="t" style="left:743px;top:483px;font-size:11px;color:#000">Slab Pocket</div>
<div class="a" style="left:868px;top:383px;width:72px;height:48px;background:#000;border:1px solid #a8a8a8;border-right-color:#d8d8d8;border-bottom-color:#d8d8d8"></div>
<div class="a" style="left:948px;top:383px;width:72px;height:48px;background:#000;border:1px solid #a8a8a8;border-right-color:#d8d8d8;border-bottom-color:#d8d8d8"></div>
<div class="a" style="left:1028px;top:383px;width:72px;height:48px;background:#000;border:1px solid #a8a8a8;border-right-color:#d8d8d8;border-bottom-color:#d8d8d8"></div>
<div class="a" style="left:1108px;top:383px;width:72px;height:48px;background:#000;border:1px solid #a8a8a8;border-right-color:#d8d8d8;border-bottom-color:#d8d8d8"></div>
<div class="a" style="left:868px;top:437px;width:72px;height:48px;background:#000;border:1px solid #a8a8a8;border-right-color:#d8d8d8;border-bottom-color:#d8d8d8"></div>
<div class="a" style="left:948px;top:437px;width:72px;height:48px;background:#000;border:1px solid #a8a8a8;border-right-color:#d8d8d8;border-bottom-color:#d8d8d8"></div>
<div class="a" style="left:1028px;top:437px;width:72px;height:48px;background:#000;border:1px solid #a8a8a8;border-right-color:#d8d8d8;border-bottom-color:#d8d8d8"></div>
<div class="a" style="left:1108px;top:437px;width:72px;height:48px;background:#000;border:1px solid #a8a8a8;border-right-color:#d8d8d8;border-bottom-color:#d8d8d8"></div>
<div class="a" style="left:868px;top:491px;width:72px;height:48px;background:#000;border:1px solid #a8a8a8;border-right-color:#d8d8d8;border-bottom-color:#d8d8d8"></div>
<div class="a" style="left:948px;top:491px;width:72px;height:48px;background:#000;border:1px solid #a8a8a8;border-right-color:#d8d8d8;border-bottom-color:#d8d8d8"></div>
<div class="a" style="left:1028px;top:491px;width:72px;height:48px;background:#000;border:1px solid #a8a8a8;border-right-color:#d8d8d8;border-bottom-color:#d8d8d8"></div>
<div class="a" style="left:1108px;top:491px;width:72px;height:48px;background:#000;border:1px solid #a8a8a8;border-right-color:#d8d8d8;border-bottom-color:#d8d8d8"></div>
<div class="a" style="left:868px;top:545px;width:72px;height:48px;background:#000;border:1px solid #a8a8a8;border-right-color:#d8d8d8;border-bottom-color:#d8d8d8"></div>
<div class="a" style="left:948px;top:545px;width:72px;height:48px;background:#000;border:1px solid #a8a8a8;border-right-color:#d8d8d8;border-bottom-color:#d8d8d8"></div>
<div class="a" style="left:1028px;top:545px;width:72px;height:48px;background:#000;border:1px solid #a8a8a8;border-right-color:#d8d8d8;border-bottom-color:#d8d8d8"></div>
<div class="a" style="left:1108px;top:545px;width:72px;height:48px;background:#000;border:1px solid #a8a8a8;border-right-color:#d8d8d8;border-bottom-color:#d8d8d8"></div>
<div class="a" style="left:868px;top:599px;width:72px;height:48px;background:#000;border:1px solid #a8a8a8;border-right-color:#d8d8d8;border-bottom-color:#d8d8d8"></div>
<div class="a" style="left:948px;top:599px;width:72px;height:48px;background:#000;border:1px solid #a8a8a8;border-right-color:#d8d8d8;border-bottom-color:#d8d8d8"></div>
<div class="a" style="left:1028px;top:599px;width:72px;height:48px;background:#000;border:1px solid #a8a8a8;border-right-color:#d8d8d8;border-bottom-color:#d8d8d8"></div>
<div class="a" style="left:1108px;top:599px;width:72px;height:48px;background:#000;border:1px solid #a8a8a8;border-right-color:#d8d8d8;border-bottom-color:#d8d8d8"></div>
<svg style="left:869px;top:384px" width="70" height="46" shape-rendering="crispEdges"><rect x="0" y="2" width="63" height="1" fill="#f4f4f4"/><rect x="3" y="0" width="1" height="41" fill="#f0f000"/><rect x="7" y="0" width="1" height="41" fill="#f0f000"/><rect x="34" y="0" width="1" height="41" fill="#f0f000"/><rect x="45" y="0" width="1" height="41" fill="#f0f000"/><rect x="5" y="0" width="1" height="46" fill="#f4f4f4"/><rect x="39" y="0" width="1" height="46" fill="#f4f4f4"/><rect x="6" y="19" width="57" height="1" fill="#0000f0"/><rect x="7" y="41" width="56" height="1" fill="#f0f000"/><rect x="0" y="42" width="63" height="1" fill="#f4f4f4"/><rect x="7" y="44" width="56" height="1" fill="#f0f000"/><rect x="3" y="0" width="4" height="4" fill="none" stroke="#e00000" stroke-width="1" transform="translate(.5 .5)"/><rect x="38" y="0" width="4" height="4" fill="none" stroke="#e00000" stroke-width="1" transform="translate(.5 .5)"/><rect x="3" y="41" width="4" height="4" fill="none" stroke="#e00000" stroke-width="1" transform="translate(.5 .5)"/><rect x="38" y="41" width="4" height="4" fill="none" stroke="#e00000" stroke-width="1" transform="translate(.5 .5)"/><path d="M17 12C13.5 12.5 13.5 18 17 19Z" fill="#f4f4f4"/><path d="M16.5 18.5L19 21" stroke="#f4f4f4" stroke-width="1.2"/><path d="M34 12C30.5 12.5 30.5 18 34 19Z" fill="#f4f4f4"/><path d="M33.5 18.5L36 21" stroke="#f4f4f4" stroke-width="1.2"/><path d="M50 12C46.5 12.5 46.5 18 50 19Z" fill="#f4f4f4"/><path d="M49.5 18.5L52 21" stroke="#f4f4f4" stroke-width="1.2"/><path d="M57 12C53.5 12.5 53.5 18 57 19Z" fill="#f4f4f4"/><path d="M56.5 18.5L59 21" stroke="#f4f4f4" stroke-width="1.2"/><rect x="0" y="12" width="3" height="7" fill="#f4f4f4"/><rect x="27" y="8" width="1" height="30" fill="#f4f4f4"/><rect x="24" y="8" width="6" height="1" fill="#e00000"/><rect x="24" y="14" width="6" height="1" fill="#e00000"/><rect x="24" y="20" width="6" height="1" fill="#e00000"/><rect x="24" y="25" width="6" height="1" fill="#e00000"/><rect x="24" y="31" width="6" height="1" fill="#e00000"/><rect x="24" y="37" width="6" height="1" fill="#e00000"/></svg>
<svg style="left:949px;top:384px" width="70" height="46" shape-rendering="crispEdges"><rect x="0" y="2" width="63" height="1" fill="#f4f4f4"/><rect x="3" y="0" width="1" height="41" fill="#f0f000"/><rect x="7" y="0" width="1" height="41" fill="#f0f000"/><rect x="34" y="0" width="1" height="41" fill="#f0f000"/><rect x="45" y="0" width="1" height="41" fill="#f0f000"/><rect x="5" y="0" width="1" height="46" fill="#f4f4f4"/><rect x="39" y="0" width="1" height="46" fill="#f4f4f4"/><rect x="6" y="19" width="57" height="1" fill="#0000f0"/><rect x="7" y="41" width="56" height="1" fill="#f0f000"/><rect x="0" y="42" width="63" height="1" fill="#f4f4f4"/><rect x="7" y="44" width="56" height="1" fill="#f0f000"/><rect x="3" y="0" width="4" height="4" fill="none" stroke="#e00000" stroke-width="1" transform="translate(.5 .5)"/><rect x="38" y="0" width="4" height="4" fill="none" stroke="#e00000" stroke-width="1" transform="translate(.5 .5)"/><rect x="3" y="41" width="4" height="4" fill="none" stroke="#e00000" stroke-width="1" transform="translate(.5 .5)"/><rect x="38" y="41" width="4" height="4" fill="none" stroke="#e00000" stroke-width="1" transform="translate(.5 .5)"/><path d="M17 12C13.5 12.5 13.5 18 17 19Z" fill="#f4f4f4"/><path d="M16.5 18.5L19 21" stroke="#f4f4f4" stroke-width="1.2"/><path d="M34 12C30.5 12.5 30.5 18 34 19Z" fill="#f4f4f4"/><path d="M33.5 18.5L36 21" stroke="#f4f4f4" stroke-width="1.2"/><path d="M50 12C46.5 12.5 46.5 18 50 19Z" fill="#f4f4f4"/><path d="M49.5 18.5L52 21" stroke="#f4f4f4" stroke-width="1.2"/><path d="M57 12C53.5 12.5 53.5 18 57 19Z" fill="#f4f4f4"/><path d="M56.5 18.5L59 21" stroke="#f4f4f4" stroke-width="1.2"/><rect x="0" y="12" width="3" height="7" fill="#f4f4f4"/></svg>
<svg style="left:1029px;top:384px" width="70" height="46"><rect x="7" y="0" width="1" height="46" fill="#f4f4f4"/><rect x="10.5" y="0" width="1" height="46" fill="#f4f4f4"/><rect x="13" y="0" width="1" height="46" fill="#f4f4f4"/><path d="M55.5 0V46" stroke="#f4f4f4" stroke-width="1" stroke-dasharray="5 2"/><rect x="7" y="35" width="56" height="1" fill="#f4f4f4"/><rect x="8" y="0" width="5" height="1.2" fill="#e00000"/><rect x="60" y="0" width="3" height="1.2" fill="#e00000"/><rect x="4" y="24" width="3" height="7" fill="none" stroke="#e00000" stroke-width="1.2"/><path d="M6 31L10 36" stroke="#f4f4f4" stroke-width="1"/><rect x="27" y="24" width="3" height="7" fill="none" stroke="#e00000" stroke-width="1.2"/><path d="M29 31L33 36" stroke="#f4f4f4" stroke-width="1"/><rect x="51" y="24" width="3" height="7" fill="none" stroke="#e00000" stroke-width="1.2"/><path d="M53 31L57 36" stroke="#f4f4f4" stroke-width="1"/></svg>
<svg style="left:1109px;top:384px" width="70" height="46"><rect x="10" y="19.5" width="46" height="1.2" fill="#e00000"/><path d="M10 20.5L13 25H7Z" fill="none" stroke="#f4f4f4" stroke-width="1.1"/><path d="M25.3 20.5L28.3 25H22.3Z" fill="none" stroke="#f4f4f4" stroke-width="1.1"/><path d="M40.6 20.5L43.6 25H37.6Z" fill="none" stroke="#f4f4f4" stroke-width="1.1"/><path d="M56 20.5L59 25H53Z" fill="none" stroke="#f4f4f4" stroke-width="1.1"/></svg>
<svg style="left:869px;top:438px" width="70" height="46"><path d="M32.5 11.5L40.5 14.5L32.5 17.5Z" fill="none" stroke="#f4f4f4" stroke-width="1.2"/><rect x="40.5" y="14" width="22" height="1.3" fill="#0000f0"/></svg>
<div class="t" style="left:882px;top:460px;font-family:&quot;Liberation Mono&quot;,monospace;font-size:9.6px;color:#f4f4f4;letter-spacing:-0.3px;transform:scaleX(0.92);transform-origin:0 0">LIVE END</div>
<svg style="left:949px;top:438px" width="70" height="46"><rect x="32" y="14" width="1.2" height="9" fill="#0000f0"/><rect x="32" y="17.7" width="31" height="1.3" fill="#0000f0"/></svg>
<div class="t" style="left:960px;top:464px;font-family:&quot;Liberation Mono&quot;,monospace;font-size:9.6px;color:#f4f4f4;letter-spacing:-0.3px;transform:scaleX(0.92);transform-origin:0 0">DEAD END</div>
<svg style="left:1029px;top:438px" width="70" height="46"><rect x="0" y="17.7" width="63" height="1.3" fill="#0000f0"/><path d="M21 18.3L32 13.5L42 18.3L32 23Z" fill="none" stroke="#0000f0" stroke-width="1.2"/><path d="M32 13.5L41 18.3L32 23Z" fill="none" stroke="#f4f4f4" stroke-width="1.2"/></svg>
<div class="t" style="left:1042px;top:464px;font-family:&quot;Liberation Mono&quot;,monospace;font-size:9.6px;color:#f4f4f4;letter-spacing:-0.3px;transform:scaleX(0.92);transform-origin:0 0">COUPLING</div>
<svg style="left:1109px;top:438px" width="70" height="46"><rect x="20.6" y="13.5" width="12" height="12" fill="none" stroke="#f0f000" stroke-width="1.3"/><path d="M32.6 14L41 19L32.6 24" fill="none" stroke="#f4f4f4" stroke-width="1.2"/><rect x="41" y="18.8" width="22" height="1.3" fill="#0000f0"/></svg>
<div class="t" style="left:1126px;top:465px;font-family:&quot;Liberation Mono&quot;,monospace;font-size:9.6px;color:#f4f4f4;letter-spacing:-0.3px;transform:scaleX(0.92);transform-origin:0 0">POCKET</div>
<div class="a" style="left:757px;top:655px;width:78px;height:20px;border:1px solid #adb2b5;border-radius:3px;background:#f4f4f4;"></div><div class="t" style="left:757px;top:659px;width:78px;text-align:center;font-size:11px;color:#838383">Previous</div>
<div class="a" style="left:865px;top:655px;width:66px;height:20px;border:1px solid #adb2b5;border-radius:3px;background:#f4f4f4;"></div><div class="t" style="left:865px;top:659px;width:66px;text-align:center;font-size:11px;color:#838383">Next</div>
<div class="a" style="left:1013px;top:655px;width:55px;height:20px;border:1px solid #3c7fb1;border-radius:3px;background:linear-gradient(#e5f4fc,#c4e5f6 50%,#98d1ef 51%,#b3e0f9);box-shadow:inset 0 0 0 1px #48d8fb"></div><div class="t" style="left:1013px;top:659px;width:55px;text-align:center;font-size:11px;color:#000">OK</div>
<div class="a" style="left:1098px;top:655px;width:64px;height:20px;border:1px solid #707070;border-radius:3px;background:linear-gradient(#f4f4f4,#ececec 50%,#dedede 51%,#d4d4d4);"></div><div class="t" style="left:1098px;top:659px;width:64px;text-align:center;font-size:11px;color:#000">Cancel</div>
<div class="a" style="left:0;top:0;width:254px;height:24px;background:linear-gradient(#a6a6a6,#8e8e8e 45%,#7c7c7c);border-bottom:1px solid #2e2e2e"></div>
<div class="a" style="left:253px;top:0;width:1099px;height:23px;background:linear-gradient(90deg,#1a5cb0,#1c62b8 40%,#1a5fb5 70%,#1858ad);border-bottom:1px solid #8fb4e0"></div>
<div class="a" style="left:253px;top:10px;width:29px;height:13px;border-radius:0 60% 0 0;background:radial-gradient(ellipse at 30% 100%,#fff0fa 0,#f0d8ec 45%,#b090c8 80%,transparent 100%);filter:blur(1px)"></div>
<div class="a" style="left:321px;top:8px;width:37px;height:15px;border-radius:45% 45% 0 0;background:radial-gradient(ellipse at 50% 100%,#f4ffff 0,#e8fcff 50%,#a8d8f0 80%,transparent 100%);filter:blur(1px)"></div>
<div class="a" style="left:391px;top:15px;width:49px;height:8px;border-radius:50% 50% 0 0;background:radial-gradient(ellipse at 50% 100%,#f0ffff 0,#d8f0fa 55%,#8cc0e8 85%,transparent 100%);filter:blur(1px)"></div>
<div class="a" style="left:680px;top:1px;width:240px;height:21px;border-radius:10px;background:rgba(120,170,230,.45);filter:blur(4px)"></div>
<div class="t" style="left:694px;top:6px;font-size:11.6px;color:#000">Autodesk AutoCAD 2015</div>
<div class="t" style="left:836px;top:6px;font-size:12px;color:#000">Drawing1.dwg</div>
<div class="a" style="left:1352px;top:0;width:14px;height:24px;background:linear-gradient(#9a9a9a,#7a7a7a)"></div>
<svg style="left:1357px;top:8px" width="6" height="8"><path d="M0 0L5 4L0 8Z" fill="#eee"/></svg>
<div class="a" style="left:1366px;top:0;width:180px;height:23px;background:#707070;border:1px solid #3a3a3a;border-top:none"></div>
<div class="t" style="left:1369px;top:6px;font-size:10.6px;font-style:italic;color:#cfcfcf">Type a keyword or phrase</div>
<div class="a" style="left:1546px;top:0;width:251px;height:24px;background:linear-gradient(#a3a3a3,#8a8a8a 50%,#7a7a7a);border-bottom:1px solid #2e2e2e"></div>
<div class="t" style="left:1595px;top:6px;font-size:12.5px;color:#fff">Sign In</div>
<div class="a" style="left:1797px;top:0;width:122px;height:24px;background:linear-gradient(90deg,#1a55a8,#3a6cb0);"></div>
<div class="a" style="left:1813px;top:-2px;width:104px;height:20px;border:1px solid #9ab6dc;border-radius:0 0 4px 4px;background:linear-gradient(#4f7fc0,#3b6aae)"></div>
<div class="a" style="left:1841px;top:0;width:1px;height:17px;background:#9ab6dc"></div>
<div class="a" style="left:1868px;top:0;width:1px;height:17px;background:#9ab6dc"></div>
<div class="a" style="left:1823px;top:9px;width:10px;height:3px;background:#fff"></div>
<svg style="left:1849px;top:3px" width="11" height="11"><rect x="3.5" y="1.5" width="6" height="6" fill="none" stroke="#fff" stroke-width="2"/><rect x="1" y="4" width="6" height="6" fill="#3b6aae" stroke="#fff" stroke-width="2"/></svg>
<svg style="left:1887px;top:3px" width="11" height="10"><path d="M1 1L10 9M10 1L1 9" stroke="#fff" stroke-width="2.6"/></svg>
<div class="a" style="left:0;top:23px;width:1919px;height:23px;background:linear-gradient(#a6a6a6 0,#9a9a9a 2px,#8a8a8a 6px,#727272 12px,#636363 17px,#5c5c5c);border-bottom:1px solid #2d2d2d;border-top:1px solid #2a2a2a"></div>
<div class="t" style="left:54px;top:29px;font-size:12px;color:#f4f4f4">File</div>
<div class="t" style="left:96px;top:29px;font-size:12px;color:#f4f4f4">Edit</div>
<div class="t" style="left:140px;top:29px;font-size:12px;color:#f4f4f4">View</div>
<div class="t" style="left:189px;top:29px;font-size:12px;color:#f4f4f4">Insert</div>
<div class="t" style="left:242px;top:29px;font-size:12px;color:#f4f4f4">Format</div>
<div class="t" style="left:304px;top:29px;font-size:12px;color:#f4f4f4">Tools</div>
<div class="t" style="left:357px;top:29px;font-size:12px;color:#f4f4f4">Draw</div>
<div class="t" style="left:408px;top:29px;font-size:12px;color:#f4f4f4">Dimension</div>
<div class="t" style="left:489px;top:29px;font-size:12px;color:#f4f4f4">Modify</div>
<div class="t" style="left:551px;top:29px;font-size:12px;color:#f4f4f4">Parametric</div>
<div class="t" style="left:632px;top:29px;font-size:12px;color:#f4f4f4">Window</div>
<div class="t" style="left:700px;top:29px;font-size:12px;color:#f4f4f4">Help</div>
<div class="t" style="left:749px;top:29px;font-size:12px;color:#f4f4f4">Express</div>
<div class="t" style="left:811px;top:29px;font-size:12px;color:#f4f4f4">SPTools</div>
<div class="t" style="left:877px;top:29px;font-size:12px;color:#f4f4f4">SPConcrete</div>
<div class="t" style="left:962px;top:29px;font-size:12px;color:#f4f4f4">SPSteelwork</div>
<div class="t" style="left:1050px;top:29px;font-size:12px;color:#f4f4f4">SPDetailer</div>
<div class="a" style="left:1871px;top:37px;width:9px;height:2px;background:#111"></div>
<svg style="left:1886px;top:29px" width="13" height="11"><rect x="4.5" y="0.5" width="7" height="6" fill="none" stroke="#111" stroke-width="1.4"/><rect x="1" y="3.5" width="7" height="6.5" fill="#6a6a6a" stroke="#111" stroke-width="1.4"/></svg>
<svg style="left:1904px;top:29px" width="10" height="10"><path d="M1 1L9 9M9 1L1 9" stroke="#111" stroke-width="2.2"/></svg>
<div class="a" style="left:0;top:0;width:40px;height:41px;background:linear-gradient(#d6d6d6,#a8a8a8 45%,#8a8a8a);border-right:1px solid #111;border-bottom:1px solid #111"></div>
<svg style="left:4px;top:5px" width="24" height="26"><path d="M11.5 0.5L23 21L18 25L15.5 20H7.5L5 25L0 21Z" fill="#dd1010"/><path d="M11.5 4L19 19M11.5 8L4 20" stroke="#801010" stroke-width="1.2" opacity=".6"/></svg>
<svg style="left:29px;top:18px" width="8" height="5"><path d="M0 0L7 0L3.5 4Z" fill="#2b2f36"/></svg>
<div class="a" style="left:0;top:46px;width:1919px;height:20px;background:#515151;border-bottom:1px solid #2f2f2f;border-right:1px solid #8a8a8a"></div>
<div class="a" style="left:3px;top:47px;width:51px;height:20px;background:linear-gradient(#6a6a6a,#5e5e5e);border:1px solid #2a2a2a;border-bottom:none"></div>
<div class="t" style="left:12px;top:50px;font-size:12px;color:#fff">Home</div>
<div class="t" style="left:64px;top:50px;font-size:12px;color:#e8e8e8">Insert</div>
<div class="t" style="left:114px;top:50px;font-size:12px;color:#e8e8e8">Annotate</div>
<div class="t" style="left:183px;top:50px;font-size:12px;color:#e8e8e8">Parametric</div>
<div class="t" style="left:259px;top:50px;font-size:12px;color:#e8e8e8">View</div>
<div class="t" style="left:305px;top:50px;font-size:12px;color:#e8e8e8">Manage</div>
<div class="t" style="left:368px;top:50px;font-size:12px;color:#e8e8e8">Output</div>
<div class="t" style="left:426px;top:50px;font-size:12px;color:#e8e8e8">Add-ins</div>
<div class="t" style="left:488px;top:50px;font-size:12px;color:#e8e8e8">Autodesk 360</div>
<div class="t" style="left:579px;top:50px;font-size:12px;color:#e8e8e8">Express Tools</div>
<div class="t" style="left:669px;top:50px;font-size:12px;color:#e8e8e8">StrucPLUS</div>
<div class="a" style="left:754px;top:52px;width:14px;height:7px;background:#d0d0d0;border-radius:3px"></div>
<svg style="left:757px;top:53px" width="8" height="5"><path d="M0 4L4 0L8 4Z" fill="#444"/></svg>
<svg style="left:772px;top:55px" width="6" height="5"><path d="M0 0L6 0L3.0 4.5Z" fill="#ddd"/></svg>
<div class="a" style="left:0;top:66px;width:1919px;height:98px;background:#484848;border-bottom:1px solid #2c2c2c"></div>
<div class="a" style="left:1607px;top:66px;width:312px;height:98px;background:linear-gradient(#4e5054 0,#4c4d50 10px,#4a4a4a 11px,#4a4a4a 34px,#444 35px,#444 66px,#3e3e3e 67px,#3e3e3e 74px,#3a3a3a 75px);border-right:1px solid #8a8a8a"></div>
<div class="a" style="left:1px;top:66px;width:223px;height:97px;background:linear-gradient(#5c5c5c,#5a5a5a 80%,#555 81%,#555 87%,#4a4a4a 88%,#474747);border-right:1px solid #3a3a3a;border-left:1px solid #6a6a6a"></div>
<div class="a" style="left:225px;top:66px;width:249px;height:97px;background:linear-gradient(#5c5c5c,#5a5a5a 80%,#555 81%,#555 87%,#4a4a4a 88%,#474747);border-right:1px solid #3a3a3a;border-left:1px solid #6a6a6a"></div>
<div class="a" style="left:475px;top:66px;width:126px;height:97px;background:linear-gradient(#5c5c5c,#5a5a5a 80%,#555 81%,#555 87%,#4a4a4a 88%,#474747);border-right:1px solid #3a3a3a;border-left:1px solid #6a6a6a"></div>
<div class="a" style="left:602px;top:66px;width:273px;height:97px;background:linear-gradient(#5c5c5c,#5a5a5a 80%,#555 81%,#555 87%,#4a4a4a 88%,#474747);border-right:1px solid #3a3a3a;border-left:1px solid #6a6a6a"></div>
<div class="a" style="left:876px;top:66px;width:160px;height:97px;background:linear-gradient(#5c5c5c,#5a5a5a 80%,#555 81%,#555 87%,#4a4a4a 88%,#474747);border-right:1px solid #3a3a3a;border-left:1px solid #6a6a6a"></div>
<div class="a" style="left:1037px;top:66px;width:263px;height:97px;background:linear-gradient(#5c5c5c,#5a5a5a 80%,#555 81%,#555 87%,#4a4a4a 88%,#474747);border-right:1px solid #3a3a3a;border-left:1px solid #6a6a6a"></div>
<div class="a" style="left:1301px;top:66px;width:68px;height:97px;background:linear-gradient(#5c5c5c,#5a5a5a 80%,#555 81%,#555 87%,#4a4a4a 88%,#474747);border-right:1px solid #3a3a3a;border-left:1px solid #6a6a6a"></div>
<div class="a" style="left:1370px;top:66px;width:96px;height:97px;background:linear-gradient(#5c5c5c,#5a5a5a 80%,#555 81%,#555 87%,#4a4a4a 88%,#474747);border-right:1px solid #3a3a3a;border-left:1px solid #6a6a6a"></div>
<div class="a" style="left:1467px;top:66px;width:79px;height:97px;background:linear-gradient(#5c5c5c,#5a5a5a 80%,#555 81%,#555 87%,#4a4a4a 88%,#474747);border-right:1px solid #3a3a3a;border-left:1px solid #6a6a6a"></div>
<div class="a" style="left:1547px;top:66px;width:60px;height:97px;background:linear-gradient(#5c5c5c,#5a5a5a 80%,#555 81%,#555 87%,#4a4a4a 88%,#474747);border-right:1px solid #3a3a3a;border-left:1px solid #6a6a6a"></div>
<div class="a" style="left:0;top:163px;width:1919px;height:1px;background:#2a2a2a"></div>
<div class="a" style="left:0;top:164px;width:1919px;height:1px;background:#7a7a7a"></div>
<div class="t" style="left:92px;top:148px;font-size:12px;color:#f2f2f2">Draw</div>
<svg style="left:127px;top:152px" width="8" height="5"><path d="M0 0L8 0L4.0 4.5Z" fill="#f0f0f0"/></svg>
<div class="t" style="left:324px;top:148px;font-size:12px;color:#f2f2f2">Modify</div>
<svg style="left:369px;top:152px" width="8" height="5"><path d="M0 0L8 0L4.0 4.5Z" fill="#f0f0f0"/></svg>
<div class="t" style="left:501px;top:148px;font-size:12px;color:#f2f2f2">Annotation</div>
<svg style="left:568px;top:152px" width="8" height="5"><path d="M0 0L8 0L4.0 4.5Z" fill="#f0f0f0"/></svg>
<div class="t" style="left:716px;top:148px;font-size:12px;color:#f2f2f2">Layers</div>
<svg style="left:755px;top:152px" width="8" height="5"><path d="M0 0L8 0L4.0 4.5Z" fill="#f0f0f0"/></svg>
<div class="t" style="left:934px;top:148px;font-size:12px;color:#f2f2f2">Block</div>
<svg style="left:967px;top:152px" width="8" height="5"><path d="M0 0L8 0L4.0 4.5Z" fill="#f0f0f0"/></svg>
<div class="t" style="left:1129px;top:148px;font-size:12px;color:#f2f2f2">Properties</div>
<svg style="left:1189px;top:152px" width="8" height="5"><path d="M0 0L8 0L4.0 4.5Z" fill="#f0f0f0"/></svg>
<div class="t" style="left:1309px;top:148px;font-size:12px;color:#f2f2f2">Groups</div>
<svg style="left:1352px;top:152px" width="8" height="5"><path d="M0 0L8 0L4.0 4.5Z" fill="#f0f0f0"/></svg>
<div class="t" style="left:1391px;top:148px;font-size:12px;color:#f2f2f2">Utilities</div>
<svg style="left:1435px;top:152px" width="8" height="5"><path d="M0 0L8 0L4.0 4.5Z" fill="#f0f0f0"/></svg>
<div class="t" style="left:1480px;top:148px;font-size:12px;color:#f2f2f2">Clipboard</div>
<div class="t" style="left:1552px;top:148px;font-size:12px;color:#f2f2f2">View</div>
<svg style="left:1581px;top:152px" width="8" height="5"><path d="M0 0L8 0L4.0 4.5Z" fill="#f0f0f0"/></svg>
<svg style="left:1288px;top:150px" width="7" height="7"><path d="M1 1L6 6M6 2.5V6H2.5" stroke="#ddd" fill="none" stroke-width="1.1"/></svg>
<svg style="left:1596px;top:150px" width="7" height="7"><path d="M1 1L6 6M6 2.5V6H2.5" stroke="#ddd" fill="none" stroke-width="1.1"/></svg>
<svg style="left:6px;top:73px" width="32" height="30"><path d="M3 27L28 3" stroke="#8a8a8a" stroke-width="1.2"/><rect x="1" y="25" width="4" height="4" fill="none" stroke="#8a8a8a"/><rect x="26" y="1" width="4" height="4" fill="none" stroke="#8a8a8a"/></svg>
<svg style="left:49px;top:76px" width="34" height="24"><path d="M5 18H18 M20 2C28 2 30 17 20 18" stroke="#8a8a8a" stroke-width="1.2" fill="none"/><rect x="2" y="16" width="4" height="4" fill="none" stroke="#8a8a8a"/><rect x="17" y="16" width="4" height="4" fill="none" stroke="#8a8a8a"/><rect x="17" y="0" width="4" height="4" fill="none" stroke="#8a8a8a"/></svg>
<svg style="left:100px;top:73px" width="30" height="30"><circle cx="15" cy="15" r="14.3" fill="#858585"/><path d="M3 22A14 14 0 0 0 27 22Z" fill="#7b7b7b"/><path d="M15 15L24 6" stroke="#6f6f6f"/><rect x="13" y="13" width="4" height="4" fill="none" stroke="#6f6f6f"/></svg>
<svg style="left:145px;top:73px" width="33" height="30"><path d="M3 27C4 15 12 6 29 3" stroke="#8a8a8a" stroke-width="1.2" fill="none"/><rect x="1" y="25" width="4" height="4" fill="none" stroke="#8a8a8a"/><rect x="26" y="1" width="4" height="4" fill="none" stroke="#8a8a8a"/><rect x="10" y="11" width="4" height="4" fill="none" stroke="#8a8a8a"/></svg>
<div class="t" style="left:11px;top:109.8px;font-size:12px;color:#7a7a7a">Line</div>
<div class="t" style="left:45px;top:109.8px;font-size:12px;color:#7a7a7a">Polyline</div>
<div class="t" style="left:100px;top:109.8px;font-size:12px;color:#7a7a7a">Circle</div>
<div class="t" style="left:152px;top:109.8px;font-size:12px;color:#7a7a7a">Arc</div>
<svg style="left:112px;top:126px" width="7" height="5"><path d="M0 0L7 0L3.5 4Z" fill="#bdbdbd"/></svg>
<svg style="left:158px;top:126px" width="7" height="5"><path d="M0 0L7 0L3.5 4Z" fill="#bdbdbd"/></svg>
<svg style="left:186px;top:76px" width="16" height="12"><rect x="3" y="1" width="12" height="9" fill="#828282"/><rect x="0" y="8" width="3" height="3" fill="none" stroke="#8a8a8a"/><rect x="13" y="0" width="3" height="3" fill="none" stroke="#8a8a8a"/></svg>
<svg style="left:186px;top:100px" width="17" height="12"><ellipse cx="8" cy="6" rx="7" ry="5" fill="#828282"/><path d="M8 4V8M6 6H10" stroke="#555"/></svg>
<svg style="left:185px;top:121px" width="18" height="18"><path d="M3 0V18M14 0V18M0 3H18M0 14H18" stroke="#8a8a8a"/><rect x="4" y="4" width="9" height="9" fill="#777"/></svg>
<svg style="left:208px;top:81px" width="7" height="5"><path d="M0 0L7 0L3.5 4Z" fill="#bdbdbd"/></svg>
<svg style="left:208px;top:105px" width="7" height="5"><path d="M0 0L7 0L3.5 4Z" fill="#bdbdbd"/></svg>
<svg style="left:208px;top:129px" width="7" height="5"><path d="M0 0L7 0L3.5 4Z" fill="#bdbdbd"/></svg>
<svg style="left:232px;top:74px" width="17" height="17"><path d="M8.5 1V16M1 8.5H16" stroke="#8a8a8a" stroke-width="1.6"/><path d="M8.5 0L6 3H11ZM8.5 17L6 14H11ZM0 8.5L3 6V11ZM17 8.5L14 6V11Z" fill="#8a8a8a"/><rect x="6.5" y="6.5" width="4" height="4" fill="#5a5a5a" stroke="#8a8a8a"/></svg>
<svg style="left:232px;top:98px" width="17" height="17"><circle cx="5" cy="5" r="4" fill="#8a8a8a"/><circle cx="10" cy="11" r="5" fill="#8a8a8a"/></svg>
<svg style="left:232px;top:122px" width="16" height="17"><path d="M1 1H10L15 16H1Z" fill="#8a8a8a"/><path d="M3 12H12M9 9L12 12L9 15" stroke="#333" fill="none"/></svg>
<div class="t" style="left:253px;top:75.8px;font-size:12px;color:#7a7a7a">Move</div>
<div class="t" style="left:253px;top:99.8px;font-size:12px;color:#7a7a7a">Copy</div>
<div class="t" style="left:253px;top:123.8px;font-size:12px;color:#7a7a7a">Stretch</div>
<svg style="left:304px;top:74px" width="16" height="17"><circle cx="8" cy="9" r="6.3" fill="none" stroke="#8a8a8a" stroke-width="1.6"/></svg>
<svg style="left:304px;top:98px" width="16" height="17"><path d="M7 1L1 16H7ZM9 1L15 16H9Z" fill="#8a8a8a"/></svg>
<svg style="left:304px;top:122px" width="16" height="16"><rect x="0" y="0" width="15" height="15" fill="#777"/><rect x="0" y="7" width="8" height="8" fill="#8a8a8a"/></svg>
<div class="t" style="left:325px;top:75.8px;font-size:12px;color:#7a7a7a">Rotate</div>
<div class="t" style="left:325px;top:99.8px;font-size:12px;color:#7a7a7a">Mirror</div>
<div class="t" style="left:325px;top:123.8px;font-size:12px;color:#7a7a7a">Scale</div>
<svg style="left:372px;top:76px" width="17" height="12"><path d="M0 7H5M6 11L11 1M12 7H17" stroke="#8a8a8a" stroke-width="1.2" stroke-dasharray="2 1"/></svg>
<svg style="left:372px;top:98px" width="16" height="17"><path d="M1 16V9C1 3 5 1 15 1V16Z" fill="#8a8a8a"/></svg>
<svg style="left:372px;top:122px" width="16" height="16"><rect x="0" y="0" width="6" height="6" fill="#8a8a8a"/><rect x="9" y="0" width="6" height="6" fill="#777"/><rect x="0" y="9" width="6" height="6" fill="#777"/><rect x="9" y="9" width="6" height="6" fill="#777"/></svg>
<div class="t" style="left:395px;top:75.8px;font-size:12px;color:#7a7a7a">Trim</div>
<div class="t" style="left:395px;top:99.8px;font-size:12px;color:#7a7a7a">Fillet</div>
<div class="t" style="left:395px;top:123.8px;font-size:12px;color:#7a7a7a">Array</div>
<svg style="left:429px;top:82px" width="7" height="5"><path d="M0 0L7 0L3.5 4Z" fill="#bdbdbd"/></svg>
<svg style="left:429px;top:106px" width="7" height="5"><path d="M0 0L7 0L3.5 4Z" fill="#bdbdbd"/></svg>
<svg style="left:429px;top:130px" width="7" height="5"><path d="M0 0L7 0L3.5 4Z" fill="#bdbdbd"/></svg>
<svg style="left:448px;top:74px" width="18" height="17"><path d="M3 14L15 2" stroke="#8a8a8a" stroke-width="2"/><path d="M0 16H18" stroke="#8a8a8a"/></svg>
<svg style="left:448px;top:98px" width="18" height="15"><path d="M0 6L6 2H18V10L12 14H0Z" fill="#8a8a8a"/></svg>
<svg style="left:448px;top:122px" width="18" height="16"><path d="M1 15V10H5V3C5 0 11 0 11 3V10H17V15Z" fill="none" stroke="#8a8a8a" stroke-width="1.5"/></svg>
<div class="t" style="left:485px;top:70px;font-size:37px;color:#878787">A</div>
<div class="t" style="left:488px;top:109.8px;font-size:12px;color:#7a7a7a">Text</div>
<svg style="left:495px;top:126px" width="7" height="5"><path d="M0 0L7 0L3.5 4Z" fill="#bdbdbd"/></svg>
<svg style="left:525px;top:74px" width="17" height="15"><path d="M1 0V15M16 0V15M1 7H16" stroke="#8a8a8a" stroke-width="1.3"/><path d="M1 7L5 4V10ZM16 7L12 4V10Z" fill="#8a8a8a"/></svg>
<svg style="left:525px;top:98px" width="17" height="17"><path d="M2 16L5 7L12 5" stroke="#8a8a8a" stroke-width="1.3" fill="none"/><circle cx="13" cy="4" r="3" fill="#8a8a8a"/></svg>
<svg style="left:527px;top:122px" width="15" height="15"><rect x="0" y="0" width="15" height="15" fill="#8a8a8a"/><path d="M0 5H15M0 10H15M5 0V15M10 0V15" stroke="#5a5a5a"/></svg>
<div class="t" style="left:547px;top:75.8px;font-size:12px;color:#7a7a7a">Linear</div>
<div class="t" style="left:547px;top:99.8px;font-size:12px;color:#7a7a7a">Leader</div>
<div class="t" style="left:547px;top:123.8px;font-size:12px;color:#7a7a7a">Table</div>
<svg style="left:586px;top:82px" width="7" height="5"><path d="M0 0L7 0L3.5 4Z" fill="#bdbdbd"/></svg>
<svg style="left:589px;top:106px" width="7" height="5"><path d="M0 0L7 0L3.5 4Z" fill="#bdbdbd"/></svg>
<svg style="left:618px;top:73px" width="32" height="30"><path d="M2 7L9 2H21L14 7Z M2 12L9 7H21L14 12Z M2 17L9 12H21L14 17Z" fill="#7d7d7d" stroke="#8d8d8d" stroke-width=".6"/><rect x="17" y="12" width="12" height="16" fill="#6d6d6d" stroke="#909090" stroke-width="1.3"/><rect x="20" y="15" width="6" height="4" fill="none" stroke="#909090"/></svg>
<div class="t" style="left:620px;top:109.8px;font-size:12px;color:#7a7a7a">Layer</div>
<div class="t" style="left:607px;top:124.8px;font-size:12px;color:#7a7a7a">Properties</div>
<div class="a" style="left:664px;top:72px;width:208px;height:21px;background:linear-gradient(#616161,#575757);border:1px solid #3b3b3b;border-radius:1px"></div>
<svg style="left:671px;top:75px" width="10" height="15"><ellipse cx="5" cy="6" rx="4.3" ry="5.5" fill="#c2b37a"/><rect x="3" y="11" width="4" height="3" fill="#9b9b9b"/></svg>
<svg style="left:688px;top:75px" width="14" height="14"><circle cx="7" cy="7" r="3.6" fill="#c7b873"/><path d="M7 0V14M0 7H14M2 2L12 12M12 2L2 12" stroke="#bdb07a" stroke-width="1"/></svg>
<svg style="left:707px;top:75px" width="14" height="14"><path d="M2 4L7 1H12L8 4Z" fill="#a5a5a5"/><rect x="4" y="8" width="7" height="5" fill="#a5a5a5"/><path d="M9 8V5C9 3 12 3 12 5" stroke="#a5a5a5" fill="none"/></svg>
<div class="a" style="left:727px;top:75px;width:14px;height:14px;background:#b5b5b5;border:1px solid #222"></div>
<div class="t" style="left:746px;top:75px;font-size:12px;color:#777">0</div>
<svg style="left:862px;top:81px" width="8" height="5"><path d="M0 0L8 0L4.0 4Z" fill="#e6e6e6"/></svg>
<svg style="left:0;top:0" width="800" height="150"><path d="M669 105L673 100H681L677 105Z" fill="#8e8e8e" stroke="#484848" stroke-width=".8"/><ellipse cx="681" cy="107" rx="3" ry="3.5" fill="#8a8a8a"/><path d="M681 110V114" stroke="#8a8a8a" stroke-width="1"/><path d="M693 111L697 106H705L701 111Z" fill="#8e8e8e" stroke="#484848" stroke-width=".8"/><path d="M693 107L697 102H705L701 107Z" fill="#8e8e8e" stroke="#484848" stroke-width=".8"/><path d="M693 103L697 98H705L701 103Z" fill="#8e8e8e" stroke="#484848" stroke-width=".8"/><path d="M707 109L702 114M702 111V114H705" stroke="#8a8a8a" fill="none"/><path d="M718 105L722 100H730L726 105Z" fill="#8e8e8e" stroke="#484848" stroke-width=".8"/><path d="M726 105V113M722 109H730M723 106L729 112M729 106L723 112" stroke="#8e8e8e" stroke-width="1.2"/><path d="M742 106L746 101H754L750 106Z" fill="#8e8e8e" stroke="#484848" stroke-width=".8"/><rect x="749" y="108" width="7" height="6" rx="1" fill="#8a8a8a"/><path d="M750.5 108V106C750.5 103.5 754.5 103.5 754.5 106V108" stroke="#8a8a8a" fill="none" stroke-width="1.2"/><path d="M765 115L769 110H777L773 115Z" fill="#8e8e8e" stroke="#484848" stroke-width=".8"/><path d="M765 111L769 106H777L773 111Z" fill="#8e8e8e" stroke="#484848" stroke-width=".8"/><path d="M765 107L769 102H777L773 107Z" fill="#8e8e8e" stroke="#484848" stroke-width=".8"/><circle cx="772" cy="100" r="3" fill="#8e8e8e"/><path d="M669 135L673 130H681L677 135Z" fill="#8e8e8e" stroke="#484848" stroke-width=".8"/><path d="M669 131L673 126H681L677 131Z" fill="#8e8e8e" stroke="#484848" stroke-width=".8"/><path d="M669 127L673 122H681L677 127Z" fill="#8e8e8e" stroke="#484848" stroke-width=".8"/><ellipse cx="681" cy="131" rx="3" ry="3.5" fill="#7e7e7e"/><path d="M681 134V138" stroke="#8a8a8a"/><path d="M693 135L697 130H705L701 135Z" fill="#8e8e8e" stroke="#484848" stroke-width=".8"/><path d="M693 131L697 126H705L701 131Z" fill="#8e8e8e" stroke="#484848" stroke-width=".8"/><path d="M693 127L697 122H705L701 127Z" fill="#8e8e8e" stroke="#484848" stroke-width=".8"/><path d="M702 138L707 133M704 133H707V136" stroke="#8a8a8a" fill="none"/><path d="M717 135L721 130H729L725 135Z" fill="#8e8e8e" stroke="#484848" stroke-width=".8"/><path d="M717 131L721 126H729L725 131Z" fill="#8e8e8e" stroke="#484848" stroke-width=".8"/><path d="M717 127L721 122H729L725 127Z" fill="#8e8e8e" stroke="#484848" stroke-width=".8"/><circle cx="727" cy="133" r="4" fill="#7a7a7a"/><path d="M727 127V139M721 133H733M723 129L731 137M731 129L723 137" stroke="#8a8a8a" stroke-width=".8"/><path d="M742 130L746 125H754L750 130Z" fill="#8e8e8e" stroke="#484848" stroke-width=".8"/><rect x="749" y="132" width="7" height="6" rx="1" fill="#7e7e7e"/><path d="M754.5 132V130C754.5 127.5 750.5 127 750.5 129" stroke="#8a8a8a" fill="none" stroke-width="1.2"/><path d="M765 135L769 130H777L773 135Z" fill="#8e8e8e" stroke="#484848" stroke-width=".8"/><path d="M765 131L769 126H777L773 131Z" fill="#8e8e8e" stroke="#484848" stroke-width=".8"/><path d="M765 127L769 122H777L773 127Z" fill="#8e8e8e" stroke="#484848" stroke-width=".8"/><path d="M775 133L779 137M779 133L775 137" stroke="#8a8a8a"/></svg>
<div class="t" style="left:785px;top:99.8px;font-size:12px;color:#7a7a7a">Make Current</div>
<div class="t" style="left:785px;top:123.8px;font-size:12px;color:#7a7a7a">Match Layer</div>
<svg style="left:880px;top:74px" width="31" height="29"><rect x="1" y="9" width="19" height="14" fill="#7e7e7e" stroke="#909090"/><path d="M12 1H25L30 6V20H12Z" fill="#888" stroke="#999" stroke-width=".8"/><circle cx="20" cy="20" r="7" fill="#858585" stroke="#999"/></svg>
<div class="t" style="left:881px;top:109.8px;font-size:12px;color:#7a7a7a">Insert</div>
<svg style="left:921px;top:75px" width="15" height="14"><rect x="3" y="3" width="8" height="6" fill="#828282"/><circle cx="11" cy="9" r="4" fill="#828282"/><rect x="0" y="9" width="3" height="3" fill="none" stroke="#888"/></svg>
<svg style="left:921px;top:99px" width="15" height="14"><rect x="2" y="5" width="8" height="6" fill="#828282"/><circle cx="9" cy="11" r="3.5" fill="#828282"/><path d="M10 5L14 0" stroke="#999"/></svg>
<svg style="left:922px;top:122px" width="14" height="14"><path d="M1 5L6 11L13 2M4 3L8 8L12 4" stroke="#8a8a8a" stroke-width="2" fill="none"/></svg>
<div class="t" style="left:941px;top:75.8px;font-size:12px;color:#7a7a7a">Create</div>
<div class="t" style="left:941px;top:99.8px;font-size:12px;color:#7a7a7a">Edit</div>
<div class="t" style="left:941px;top:123.8px;font-size:12px;color:#7a7a7a">Edit Attributes</div>
<svg style="left:1023px;top:130px" width="7" height="5"><path d="M0 0L7 0L3.5 4Z" fill="#bdbdbd"/></svg>
<svg style="left:1051px;top:73px" width="32" height="30"><rect x="2" y="1" width="23" height="27" fill="#7b7b7b" stroke="#8f8f8f"/><rect x="4" y="3" width="13" height="9" fill="#666" stroke="#8f8f8f" stroke-width=".7"/><path d="M4 17H12M4 22H16" stroke="#555"/><path d="M17 25L29 13" stroke="#8f8f8f" stroke-width="3"/></svg>
<div class="t" style="left:1051px;top:109.8px;font-size:12px;color:#7a7a7a">Match</div>
<div class="t" style="left:1041px;top:124.8px;font-size:12px;color:#7a7a7a">Properties</div>
<svg style="left:1100px;top:74px" width="17" height="17"><circle cx="8.5" cy="8.5" r="8" fill="#d33"/><path d="M8.5 8.5L8.5 0.5A8 8 0 0 1 16.5 8.5Z" fill="#f0c020"/><path d="M8.5 8.5L16.5 8.5A8 8 0 0 1 8.5 16.5Z" fill="#5b3"/><path d="M8.5 8.5L8.5 16.5A8 8 0 0 1 0.5 8.5Z" fill="#3a6fd0"/><path d="M8.5 8.5L0.5 8.5A8 8 0 0 1 8.5 .5Z" fill="#b040c0"/><circle cx="8.5" cy="8.5" r="8" fill="none" stroke="#444"/></svg>
<svg style="left:1100px;top:97px" width="17" height="17"><path d="M0 2H17M0 8H17M0 14H17" stroke="#8c8c8c" stroke-width="3"/></svg>
<svg style="left:1100px;top:121px" width="17" height="17"><path d="M0 2H17M0 7H17M0 12H17M0 16H17" stroke="#8c8c8c" stroke-width="1" stroke-dasharray="2 1"/></svg>
<div class="a" style="left:1118px;top:72px;width:180px;height:20px;background:linear-gradient(#606060,#565656);border:1px solid #3d3d3d"></div>
<div class="a" style="left:1118px;top:95px;width:180px;height:20px;background:linear-gradient(#606060,#565656);border:1px solid #3d3d3d"></div>
<div class="a" style="left:1118px;top:119px;width:180px;height:20px;background:linear-gradient(#606060,#565656);border:1px solid #3d3d3d"></div>
<div class="a" style="left:1131px;top:75px;width:15px;height:14px;background:#a9a9a9;border:1px solid #7a7a7a"></div>
<div class="t" style="left:1157px;top:76px;font-size:12px;color:#7c7c7c">ByLayer</div>
<svg style="left:1285px;top:81px" width="7" height="5"><path d="M0 0L7 0L3.5 4Z" fill="#7a7a7a"/></svg>
<div class="a" style="left:1127px;top:104px;width:59px;height:1px;background:#f4f4f4"></div>
<div class="a" style="left:1127px;top:128px;width:59px;height:1px;background:#f4f4f4"></div>
<div class="t" style="left:1188px;top:99px;font-size:12px;color:#b5b5b5">ByLayer</div>
<div class="t" style="left:1188px;top:123px;font-size:12px;color:#b5b5b5">ByLayer</div>
<svg style="left:1285px;top:104px" width="8" height="5"><path d="M0 0L8 0L4.0 4Z" fill="#f0f0f0"/></svg>
<svg style="left:1285px;top:128px" width="8" height="5"><path d="M0 0L8 0L4.0 4Z" fill="#f0f0f0"/></svg>
<svg style="left:1306px;top:72px" width="32" height="30"><rect x="1" y="1" width="18" height="25" fill="none" stroke="#808080" stroke-dasharray="2 1"/><rect x="3" y="6" width="11" height="8" fill="#888"/><circle cx="9" cy="20" r="5" fill="#888"/><path d="M17 9L31 2M17 9L30 14M17 9L23 0M17 9L27 18" stroke="#8c8c8c" stroke-width="1.3"/></svg>
<div class="t" style="left:1306px;top:109.8px;font-size:12px;color:#7a7a7a">Group</div>
<svg style="left:1348px;top:74px" width="13" height="13"><rect x="1" y="0" width="6" height="6" fill="none" stroke="#888" stroke-dasharray="1 1"/><circle cx="4" cy="10" r="2.5" fill="#888"/><path d="M8 7L13 2" stroke="#999"/></svg>
<svg style="left:1348px;top:98px" width="13" height="13"><rect x="1" y="1" width="5" height="11" fill="none" stroke="#888" stroke-dasharray="1 1"/><path d="M8 4H13M10.5 1.5V6.5M8 10H13" stroke="#888"/></svg>
<div class="a" style="left:1344px;top:119px;width:23px;height:21px;background:#5a70a3;border:1px solid #6f8bc9"></div>
<svg style="left:1349px;top:123px" width="14" height="14"><rect x="0" y="1" width="3" height="3" fill="#999"/><rect x="0" y="7" width="3" height="3" fill="#999"/><path d="M6 2L12 9H9L10 13L8 13L7 9L5 11Z" fill="#aaa"/></svg>
<svg style="left:1390px;top:80px" width="30" height="20"><path d="M1 1V10M29 1V10M1 5.5H29" stroke="#8a8a8a" stroke-width="1.3"/><path d="M1 5.5L5 3V8ZM29 5.5L25 3V8Z" fill="#8a8a8a"/><rect x="1" y="13" width="28" height="4" fill="#808080"/></svg>
<div class="t" style="left:1383px;top:109.8px;font-size:12px;color:#7a7a7a">Measure</div>
<svg style="left:1402px;top:126px" width="7" height="5"><path d="M0 0L7 0L3.5 4Z" fill="#bdbdbd"/></svg>
<svg style="left:1444px;top:75px" width="16" height="16"><rect x="1" y="2" width="8" height="12" fill="none" stroke="#888" stroke-width="1.4"/><path d="M7 5L13 11H10L11 15L9 15L8 11L6 13Z" fill="#999"/></svg>
<svg style="left:1444px;top:98px" width="16" height="16"><path d="M8 0V16M0 8H16" stroke="#8a8a8a" stroke-width="1.2"/><circle cx="8" cy="8" r="2.5" fill="none" stroke="#8a8a8a"/></svg>
<svg style="left:1445px;top:122px" width="12" height="15"><rect x="0" y="0" width="11" height="15" fill="#8a8a8a"/><rect x="2" y="2" width="7" height="3" fill="#666"/><path d="M2 8H9M2 11H9M4 6V14M7 6V14" stroke="#666"/></svg>
<svg style="left:1481px;top:74px" width="29" height="30"><rect x="2" y="3" width="17" height="24" fill="#7f7f7f" stroke="#8f8f8f"/><rect x="7" y="0" width="8" height="5" fill="#8f8f8f"/><path d="M10 10H22L27 15V29H10Z" fill="#8c8c8c" stroke="#999" stroke-width=".8"/></svg>
<div class="t" style="left:1480px;top:109.8px;font-size:12px;color:#7a7a7a">Paste</div>
<svg style="left:1491px;top:126px" width="7" height="5"><path d="M0 0L7 0L3.5 4Z" fill="#bdbdbd"/></svg>
<svg style="left:1524px;top:74px" width="16" height="16"><circle cx="3" cy="13" r="2.5" fill="none" stroke="#888" stroke-width="1.4"/><circle cx="13" cy="13" r="2.5" fill="none" stroke="#888" stroke-width="1.4"/><path d="M1 1L11 11M15 1L5 11" stroke="#888" stroke-width="1.4"/></svg>
<svg style="left:1525px;top:98px" width="14" height="16"><rect x="0" y="0" width="9" height="11" fill="#808080"/><rect x="4" y="4" width="9" height="11" fill="#8c8c8c" stroke="#6a6a6a" stroke-width=".6"/></svg>
<svg style="left:1565px;top:79px" width="27" height="19"><path d="M0 0H10V5H26V18H0Z" fill="#8a8a8a"/></svg>
<div class="t" style="left:1566px;top:109.8px;font-size:12px;color:#7a7a7a">Base</div>
<svg style="left:1576px;top:126px" width="7" height="5"><path d="M0 0L7 0L3.5 4Z" fill="#bdbdbd"/></svg>
<div class="a" style="left:0;top:165px;width:1919px;height:25px;background:#3c3c3c"></div>
<svg style="left:0;top:167px" width="180" height="24"><path d="M4 23C14 23 17 18 20 8C22 2 25 1 32 1H132C139 1 141 3 143 8C146 18 150 23 162 23Z" fill="url(#tg)"/><defs><linearGradient id="tg" x1="0" y1="0" x2="0" y2="1"><stop offset="0" stop-color="#7a7a7a"/><stop offset=".5" stop-color="#666"/><stop offset="1" stop-color="#5c5c5c"/></linearGradient></defs></svg>
<div class="t" style="left:31px;top:174px;font-size:12px;color:#f2f2f2">Drawing1*</div>
<svg style="left:123px;top:175px" width="8" height="8"><path d="M1 1L7 7M7 1L1 7" stroke="#444" stroke-width="1.6"/></svg>
<svg style="left:0;top:165px" width="180" height="26"><path d="M150.5 8H166C170 8 172.5 13 173 17V22H158C154 22 151.5 15 150.5 8Z" fill="#525252" stroke="#5e5e5e" stroke-width=".8"/></svg>
<svg style="left:156px;top:175px" width="11" height="11"><path d="M5.5 1.5V9.5M1.5 5.5H9.5" stroke="#2a2a2a" stroke-width="4"/><path d="M5.5 2V9M2 5.5H9" stroke="#c8c8c8" stroke-width="2.2"/></svg>
<div class="a" style="left:0;top:190px;width:1919px;height:32px;background:#5e5e5e;border-top:1px solid #333"></div>
<div class="a" style="left:0px;top:194px;width:152px;height:24px;background:#5a5a5a;border:1px solid #3b3b3b;box-shadow:inset 1px 1px 0 #666"></div>
<div class="a" style="left:154px;top:194px;width:228px;height:24px;background:#5a5a5a;border:1px solid #3b3b3b;box-shadow:inset 1px 1px 0 #666"></div>
<div class="a" style="left:383px;top:194px;width:436px;height:24px;background:#5a5a5a;border:1px solid #3b3b3b;box-shadow:inset 1px 1px 0 #666"></div>
<div class="a" style="left:1px;top:195px;width:7px;height:22px;background:#565656"></div>
<svg style="left:2px;top:198px" width="6" height="16"><rect x="0" y="0" width="1" height="1" fill="#151515"/><rect x="0" y="2" width="1" height="1" fill="#151515"/><rect x="0" y="4" width="1" height="1" fill="#151515"/><rect x="0" y="6" width="1" height="1" fill="#151515"/><rect x="0" y="8" width="1" height="1" fill="#151515"/><rect x="0" y="10" width="1" height="1" fill="#151515"/><rect x="0" y="12" width="1" height="1" fill="#151515"/><rect x="0" y="14" width="1" height="1" fill="#151515"/><rect x="2" y="0" width="1" height="1" fill="#151515"/><rect x="2" y="2" width="1" height="1" fill="#151515"/><rect x="2" y="4" width="1" height="1" fill="#151515"/><rect x="2" y="6" width="1" height="1" fill="#151515"/><rect x="2" y="8" width="1" height="1" fill="#151515"/><rect x="2" y="10" width="1" height="1" fill="#151515"/><rect x="2" y="12" width="1" height="1" fill="#151515"/><rect x="2" y="14" width="1" height="1" fill="#151515"/><rect x="4" y="0" width="1" height="1" fill="#151515"/><rect x="4" y="2" width="1" height="1" fill="#151515"/><rect x="4" y="4" width="1" height="1" fill="#151515"/><rect x="4" y="6" width="1" height="1" fill="#151515"/><rect x="4" y="8" width="1" height="1" fill="#151515"/><rect x="4" y="10" width="1" height="1" fill="#151515"/><rect x="4" y="12" width="1" height="1" fill="#151515"/><rect x="4" y="14" width="1" height="1" fill="#151515"/></svg>
<svg style="left:156px;top:198px" width="6" height="16"><rect x="0" y="0" width="1" height="1" fill="#151515"/><rect x="0" y="2" width="1" height="1" fill="#151515"/><rect x="0" y="4" width="1" height="1" fill="#151515"/><rect x="0" y="6" width="1" height="1" fill="#151515"/><rect x="0" y="8" width="1" height="1" fill="#151515"/><rect x="0" y="10" width="1" height="1" fill="#151515"/><rect x="0" y="12" width="1" height="1" fill="#151515"/><rect x="0" y="14" width="1" height="1" fill="#151515"/><rect x="2" y="0" width="1" height="1" fill="#151515"/><rect x="2" y="2" width="1" height="1" fill="#151515"/><rect x="2" y="4" width="1" height="1" fill="#151515"/><rect x="2" y="6" width="1" height="1" fill="#151515"/><rect x="2" y="8" width="1" height="1" fill="#151515"/><rect x="2" y="10" width="1" height="1" fill="#151515"/><rect x="2" y="12" width="1" height="1" fill="#151515"/><rect x="2" y="14" width="1" height="1" fill="#151515"/><rect x="4" y="0" width="1" height="1" fill="#151515"/><rect x="4" y="2" width="1" height="1" fill="#151515"/><rect x="4" y="4" width="1" height="1" fill="#151515"/><rect x="4" y="6" width="1" height="1" fill="#151515"/><rect x="4" y="8" width="1" height="1" fill="#151515"/><rect x="4" y="10" width="1" height="1" fill="#151515"/><rect x="4" y="12" width="1" height="1" fill="#151515"/><rect x="4" y="14" width="1" height="1" fill="#151515"/></svg>
<svg style="left:386px;top:198px" width="6" height="16"><rect x="0" y="0" width="1" height="1" fill="#151515"/><rect x="0" y="2" width="1" height="1" fill="#151515"/><rect x="0" y="4" width="1" height="1" fill="#151515"/><rect x="0" y="6" width="1" height="1" fill="#151515"/><rect x="0" y="8" width="1" height="1" fill="#151515"/><rect x="0" y="10" width="1" height="1" fill="#151515"/><rect x="0" y="12" width="1" height="1" fill="#151515"/><rect x="0" y="14" width="1" height="1" fill="#151515"/><rect x="2" y="0" width="1" height="1" fill="#151515"/><rect x="2" y="2" width="1" height="1" fill="#151515"/><rect x="2" y="4" width="1" height="1" fill="#151515"/><rect x="2" y="6" width="1" height="1" fill="#151515"/><rect x="2" y="8" width="1" height="1" fill="#151515"/><rect x="2" y="10" width="1" height="1" fill="#151515"/><rect x="2" y="12" width="1" height="1" fill="#151515"/><rect x="2" y="14" width="1" height="1" fill="#151515"/><rect x="4" y="0" width="1" height="1" fill="#151515"/><rect x="4" y="2" width="1" height="1" fill="#151515"/><rect x="4" y="4" width="1" height="1" fill="#151515"/><rect x="4" y="6" width="1" height="1" fill="#151515"/><rect x="4" y="8" width="1" height="1" fill="#151515"/><rect x="4" y="10" width="1" height="1" fill="#151515"/><rect x="4" y="12" width="1" height="1" fill="#151515"/><rect x="4" y="14" width="1" height="1" fill="#151515"/></svg>
<svg style="left:0;top:0" width="1919" height="230"><rect x="13.5" y="199.5" width="12" height="13" fill="#fff" stroke="#7a1a14" stroke-width="1"/><rect x="13.5" y="205.5" width="6" height="7" fill="#fff" stroke="#222" stroke-dasharray="1 1"/><rect x="33" y="197" width="1" height="18" fill="#3a3a3a"/><rect x="34" y="197" width="1" height="18" fill="#9a9a9a"/><path d="M43 202L45 198H54L52 202Z" fill="#fff" stroke="#111" stroke-width="1"/><path d="M40.5 203.5H55.5V211.5H41.5Z" fill="#2a2a2a" stroke="#0a0a0a" stroke-width="1.2"/><rect x="41" y="206" width="14" height="1" fill="#555"/><rect x="47" y="208" width="3" height="2" fill="#dede30"/><rect x="62" y="197" width="1" height="18" fill="#3a3a3a"/><rect x="63" y="197" width="1" height="18" fill="#9a9a9a"/><rect x="68" y="197" width="1" height="18" fill="#3a3a3a"/><rect x="69" y="197" width="1" height="18" fill="#9a9a9a"/><rect x="74" y="197" width="1" height="18" fill="#3a3a3a"/><rect x="75" y="197" width="1" height="18" fill="#9a9a9a"/><rect x="82.5" y="199.5" width="13" height="13" fill="none" stroke="#0a0a0a" stroke-width="1.3"/><path d="M82.5 208.5H95.5" stroke="#0a0a0a"/><rect x="84" y="210" width="2.5" height="1.5" fill="#0a0a0a"/><rect x="88" y="210" width="2.5" height="1.5" fill="#0a0a0a"/><rect x="92" y="210" width="2.5" height="1.5" fill="#0a0a0a"/><path d="M105.5 203V199.5H109M115 199.5H118.5V203M118.5 209V212.5H115M109 212.5H105.5V209" stroke="#000" stroke-width="2" fill="none"/><rect x="126" y="197" width="1" height="18" fill="#3a3a3a"/><rect x="127" y="197" width="1" height="18" fill="#9a9a9a"/><path d="M137 204C137 200 139 199 141 199C143.5 199 145 200.5 145 202.5C145 205 141 206 141 209V212" stroke="#b01010" stroke-width="1.8" fill="none"/><circle cx="141" cy="214" r="1" fill="#b01010"/><circle cx="138" cy="202" r=".8" fill="#f33"/><circle cx="144" cy="204" r=".8" fill="#f33"/><rect x="152" y="195" width="1" height="22" fill="#3b3b3b"/><path d="M175.0 207.0L180.5 212.5" stroke="#222" stroke-width="3.2"/><path d="M175.0 207.0L180.0 212.0" stroke="#eee" stroke-width="1.8"/><circle cx="172.5" cy="204.5" r="4.5" fill="#d8d8d8" stroke="#2a2a2a" stroke-width="1.1"/><circle cx="172.5" cy="204.5" r="3.3" fill="none" stroke="#f4f4f4" stroke-width=".8"/><rect x="170.5" y="202.5" width="4" height="4" fill="none" stroke="#333"/><path d="M189 201V198.5H191.5M197 198.5H199.5V201M189 206V208.5H191.5" stroke="#eee" stroke-width="1.6" fill="none"/><path d="M201.0 210.5L206.5 216" stroke="#222" stroke-width="3.2"/><path d="M201.0 210.5L206.0 215.5" stroke="#eee" stroke-width="1.8"/><circle cx="198.5" cy="208" r="3.2" fill="#d8d8d8" stroke="#2a2a2a" stroke-width="1.1"/><circle cx="198.5" cy="208" r="2.0" fill="none" stroke="#f4f4f4" stroke-width=".8"/><path d="M222.0 207.5L227.5 213" stroke="#222" stroke-width="3.2"/><path d="M222.0 207.5L227.0 212.5" stroke="#eee" stroke-width="1.8"/><circle cx="219.5" cy="205" r="4.5" fill="#d8d8d8" stroke="#2a2a2a" stroke-width="1.1"/><circle cx="219.5" cy="205" r="3.3" fill="none" stroke="#f4f4f4" stroke-width=".8"/><path d="M217.5 203L221.5 207M221.5 203L217.5 207" stroke="#333"/><path d="M244.5 207.5L250 213" stroke="#222" stroke-width="3.2"/><path d="M244.5 207.5L249.5 212.5" stroke="#eee" stroke-width="1.8"/><circle cx="242" cy="205" r="4.5" fill="#d8d8d8" stroke="#2a2a2a" stroke-width="1.1"/><circle cx="242" cy="205" r="3.3" fill="none" stroke="#f4f4f4" stroke-width=".8"/><path d="M242 201V209M238 205H246" stroke="#333"/><rect x="259" y="199" width="8" height="8" fill="#eee" stroke="#333" stroke-width=".8"/><path d="M270.5 211.0L276 216.5" stroke="#222" stroke-width="3.2"/><path d="M270.5 211.0L275.5 216.0" stroke="#eee" stroke-width="1.8"/><circle cx="268" cy="208.5" r="3.4" fill="#d8d8d8" stroke="#2a2a2a" stroke-width="1.1"/><circle cx="268" cy="208.5" r="2.2" fill="none" stroke="#f4f4f4" stroke-width=".8"/><rect x="280" y="197" width="1" height="18" fill="#3a3a3a"/><rect x="281" y="197" width="1" height="18" fill="#9a9a9a"/><path d="M295.5 207.5L301 213" stroke="#222" stroke-width="3.2"/><path d="M295.5 207.5L300.5 212.5" stroke="#eee" stroke-width="1.8"/><circle cx="293" cy="205" r="4.5" fill="#d8d8d8" stroke="#2a2a2a" stroke-width="1.1"/><circle cx="293" cy="205" r="3.3" fill="none" stroke="#f4f4f4" stroke-width=".8"/><path d="M293 202V208M290 205H296" stroke="#222" stroke-width="1.4"/><rect x="310" y="200" width="8" height="2" fill="#eee"/><path d="M321.0 211.5L326.5 217" stroke="#222" stroke-width="3.2"/><path d="M321.0 211.5L326.0 216.5" stroke="#eee" stroke-width="1.8"/><circle cx="318.5" cy="209" r="3.4" fill="#d8d8d8" stroke="#2a2a2a" stroke-width="1.1"/><circle cx="318.5" cy="209" r="2.2" fill="none" stroke="#f4f4f4" stroke-width=".8"/><rect x="332" y="197" width="1" height="18" fill="#3a3a3a"/><rect x="333" y="197" width="1" height="18" fill="#9a9a9a"/><path d="M339.5 198.5H345L348 201.5V211.5H339.5Z" fill="#eee" stroke="#333" stroke-width=".8"/><path d="M350.0 211.0L355.5 216.5" stroke="#222" stroke-width="3.2"/><path d="M350.0 211.0L355.0 216.0" stroke="#eee" stroke-width="1.8"/><circle cx="347.5" cy="208.5" r="3.4" fill="#d8d8d8" stroke="#2a2a2a" stroke-width="1.1"/><circle cx="347.5" cy="208.5" r="2.2" fill="none" stroke="#f4f4f4" stroke-width=".8"/><path d="M370.5 207.5L376 213" stroke="#222" stroke-width="3.2"/><path d="M370.5 207.5L375.5 212.5" stroke="#eee" stroke-width="1.8"/><circle cx="368" cy="205" r="4.5" fill="#d8d8d8" stroke="#2a2a2a" stroke-width="1.1"/><circle cx="368" cy="205" r="3.3" fill="none" stroke="#f4f4f4" stroke-width=".8"/><path d="M368 201V209M364 205H372" stroke="#333"/><rect x="366" y="203" width="4" height="4" fill="none" stroke="#333"/><rect x="381" y="195" width="1" height="22" fill="#3b3b3b"/><path d="M397 202V213M409 202V213M397 206H409" stroke="#0a0a0a" stroke-width="1.4"/><path d="M398 206L401.0 204.2L401.0 207.8Z" fill="#0c0c0c"/><path d="M408 206L405.0 207.8L405.0 204.2Z" fill="#0c0c0c"/><path d="M419 202L423 198M429 212L433 208M422 203L430 211" stroke="#0a0a0a" stroke-width="1.3"/><path d="M422 203L425.9597979746447 203.98994949366116L422.9899494936612 206.95979797464466Z" fill="#0c0c0c"/><path d="M430 211L426.0402020253553 210.01005050633884L429.0100505063388 207.04020202535534Z" fill="#0c0c0c"/><path d="M444 212H456M448 203V213M448 205L451 208L454 205" stroke="#0a0a0a" stroke-width="1.2" fill="none"/><circle cx="442.5" cy="212" r="1" fill="none" stroke="#0a0a0a"/><circle cx="448.5" cy="199.5" r="1" fill="none" stroke="#0a0a0a"/><path d="M455 198L457 201M457 198L455 201M441 203L442 205L443 203M442 205V207" stroke="#0a0a0a" stroke-width=".8"/><rect x="464" y="197" width="1" height="18" fill="#3a3a3a"/><rect x="465" y="197" width="1" height="18" fill="#9a9a9a"/><circle cx="478.5" cy="206" r="7.2" fill="none" stroke="#8a8a8a" stroke-width=".8"/><path d="M476 203.5L480 207.5" stroke="#0a0a0a" stroke-width="1.3"/><path d="M475 202.5L478.9597979746447 203.48994949366116L475.9899494936612 206.45979797464466Z" fill="#0c0c0c"/><circle cx="501.5" cy="206" r="7.2" fill="none" stroke="#8a8a8a" stroke-width=".8"/><path d="M498 202.5L505 209.5" stroke="#0a0a0a" stroke-width="1.3"/><path d="M497.5 202L501.4597979746447 202.98994949366116L498.4899494936612 205.95979797464466Z" fill="#0c0c0c"/><path d="M505.5 210L501.5402020253553 209.01005050633884L504.5100505063388 206.04020202535534Z" fill="#0c0c0c"/><path d="M517 213H531M517 212L524 199" stroke="#0a0a0a" stroke-width="1.2" fill="none"/><path d="M524 203C527 205 528 207 528 211" stroke="#0a0a0a" stroke-width="1.2" fill="none"/><path d="M528 212L526.2 209.0L529.8 209.0Z" fill="#0c0c0c"/><rect x="538" y="197" width="1" height="18" fill="#3a3a3a"/><rect x="539" y="197" width="1" height="18" fill="#9a9a9a"/><path d="M545.5 199V209M559 199V206M545.5 202H559" stroke="#0a0a0a" stroke-width="1.3"/><path d="M546.5 202L549.5 200.2L549.5 203.8Z" fill="#0c0c0c"/><path d="M558 202L555.0 203.8L555.0 200.2Z" fill="#0c0c0c"/><path d="M561 204L556 210H559L555 215L561 208H558Z" fill="#f0e020"/><path d="M569.5 200V213M580 206V213M569.5 203H584M569.5 210H580" stroke="#0a0a0a" stroke-width="1.3"/><path d="M570.5 203L573.5 201.2L573.5 204.8Z" fill="#0c0c0c"/><path d="M584 203L581.0 204.8L581.0 201.2Z" fill="#0c0c0c"/><path d="M570.5 210L573.5 208.2L573.5 211.8Z" fill="#0c0c0c"/><path d="M579 210L576.0 211.8L576.0 208.2Z" fill="#0c0c0c"/><path d="M591.5 200V213M599 201V212M606.5 200V213M591.5 206H606.5" stroke="#0a0a0a" stroke-width="1.3"/><rect x="593" y="205.5" width="1.5" height="1" fill="#d02020"/><rect x="604" y="205.5" width="1.5" height="1" fill="#d02020"/><rect x="614" y="197" width="1" height="18" fill="#3a3a3a"/><rect x="615" y="197" width="1" height="18" fill="#9a9a9a"/><path d="M620 212L626 205H628" stroke="#0a0a0a" stroke-width="1.2" fill="none"/><path d="M620 212L620.9050966799188 208.3796132803249L623.6203867196751 211.09490332008122Z" fill="#0c0c0c"/><path d="M629 206L631.5 200L634 206M630 204H633" stroke="#0a0a0a" stroke-width=".9" fill="none"/><path d="M643 212L649 205H651" stroke="#0a0a0a" stroke-width="1.2" fill="none"/><path d="M643 212L643.9050966799188 208.3796132803249L646.6203867196751 211.09490332008122Z" fill="#0c0c0c"/><path d="M652 206L654.5 200L657 206M653 204H656" stroke="#0a0a0a" stroke-width=".9" fill="none"/><rect x="666.5" y="202.5" width="15" height="9" fill="#f4f4f4" stroke="#0a0a0a" stroke-width="1.2"/><path d="M673.5 202.5V211.5" stroke="#0a0a0a"/><path d="M670 204L672 207L670 210L668 207Z" fill="none" stroke="#0a0a0a" stroke-width=".8"/><path d="M677 209V210M679 204V210" stroke="#0a0a0a" stroke-width="1.2"/><circle cx="697.5" cy="206" r="7.2" fill="none" stroke="#8a8a8a" stroke-width=".8"/><path d="M697.5 203V209M694.5 206H700.5" stroke="#0a0a0a" stroke-width="1.2"/><rect x="712" y="197" width="1" height="18" fill="#3a3a3a"/><rect x="713" y="197" width="1" height="18" fill="#9a9a9a"/><path d="M723 206L726 199L729 206M724 204H728" stroke="#c02010" stroke-width="1" fill="none"/><path d="M719 211H733M719 208V214M733 208V214" stroke="#0a0a0a" stroke-width="1.3"/><path d="M720 211L723.0 209.2L723.0 212.8Z" fill="#0c0c0c"/><path d="M732 211L729.0 212.8L729.0 209.2Z" fill="#0c0c0c"/><path d="M746 206L749 199L752 206M747 204H751" stroke="#0a0a0a" stroke-width="1" fill="none"/><path d="M750 204L753 198L756 204" stroke="#999" stroke-width="1" fill="none"/><path d="M742 211H757M742 208V214M757 208V214" stroke="#0a0a0a" stroke-width="1.3"/><path d="M743 211L746.0 209.2L746.0 212.8Z" fill="#0c0c0c"/><path d="M756 211L753.0 212.8L753.0 209.2Z" fill="#0c0c0c"/><rect x="764" y="197" width="1" height="18" fill="#3a3a3a"/><rect x="765" y="197" width="1" height="18" fill="#9a9a9a"/><path d="M772 200V207M784 199V210M772 202H784" stroke="#0a0a0a" stroke-width="1.3"/><path d="M773 202L776.0 200.2L776.0 203.8Z" fill="#0c0c0c"/><path d="M783 202L780.0 203.8L780.0 200.2Z" fill="#0c0c0c"/><circle cx="773" cy="207" r="2.8" fill="#eee" stroke="#222" stroke-width=".8"/><path d="M775 209L779 213" stroke="#3060c0" stroke-width="1.6"/><rect x="793" y="197" width="1" height="18" fill="#3a3a3a"/><rect x="794" y="197" width="1" height="18" fill="#9a9a9a"/><path d="M800 203V213M814 198V213M808 198V213M800 206H814" stroke="#0a0a0a" stroke-width="1.3"/><path d="M808 200H814M808 198V203M814 198V203" stroke="#d01010" stroke-width="1.1"/><path d="M801 206L804.0 204.2L804.0 207.8Z" fill="#0c0c0c"/><path d="M813 206L810.0 207.8L810.0 204.2Z" fill="#0c0c0c"/><path d="M49.5 6.5H61L64.5 9.5V18.5H49.5Z" fill="#eef0f2" stroke="#333" stroke-width="1"/><path d="M61 6.5V9.5H64.5" fill="#ccc" stroke="#333" stroke-width=".8"/><rect x="51" y="10" width="12" height="3" fill="#d6dde4"/><path d="M74.5 7.5H79L80 9H86.5V17.5H74.5Z" fill="#d8d8d8" stroke="#222" stroke-width="1"/><path d="M75 17L78 12H89L86 17Z" fill="#eee" stroke="#222" stroke-width="1"/><rect x="98.5" y="5.5" width="11" height="13" rx="1" fill="#3a3f48" stroke="#111"/><rect x="100.5" y="6" width="7" height="4" fill="#e8e8e8"/><rect x="101" y="13" width="6" height="5" fill="#f4f4f4"/><rect x="102" y="14" width="2" height="3" fill="#333"/><rect x="121.5" y="5.5" width="11" height="13" rx="1" fill="#3a3f48" stroke="#111"/><rect x="123.5" y="6" width="7" height="4" fill="#e8e8e8"/><rect x="124" y="13" width="6" height="5" fill="#f4f4f4"/><path d="M128 13L135 5" stroke="#e8a020" stroke-width="2.4"/><path d="M128 13L135 5" stroke="#a03010" stroke-width=".6"/><rect x="147" y="2" width="10" height="4" fill="#f0f0f0" stroke="#333" stroke-width=".8"/><path d="M144.5 7.5H159.5V15.5H144.5Z" fill="#d8d8d8" stroke="#333" stroke-width="1"/><rect x="147" y="14" width="10" height="5" fill="#f0f0f0" stroke="#333" stroke-width=".8"/><rect x="149" y="16" width="6" height="1" fill="#6a8ac0"/><path d="M183 17V13C183 10 181 9 178 9H172" stroke="#222" stroke-width="3.6" fill="none"/><path d="M183 17V13C183 10 181 9 178 9H172" stroke="#e8e8e8" stroke-width="2" fill="none"/><path d="M170 9L175 4.5V13.5Z" fill="#e8e8e8" stroke="#222" stroke-width=".9"/><path d="M192 9H198L195 12Z" fill="#f0f0f0"/><path d="M206 17V13C206 10 208 9 211 9H217" stroke="#6a6a6a" stroke-width="3.6" fill="none"/><path d="M206 17V13C206 10 208 9 211 9H217" stroke="#a8a8a8" stroke-width="2" fill="none"/><path d="M219 9L214 4.5V13.5Z" fill="#a8a8a8" stroke="#6a6a6a" stroke-width=".9"/><path d="M227 10H233L230 13Z" fill="#f0f0f0"/><rect x="240" y="6" width="9" height="1.5" fill="#f0f0f0"/><path d="M240 9H249L244.5 14Z" fill="#f0f0f0"/><rect x="1551" y="7" width="5" height="10" rx="1" fill="#f4f4f4" stroke="#111"/><rect x="1559" y="7" width="5" height="10" rx="1" fill="#f4f4f4" stroke="#111"/><rect x="1555" y="9" width="5" height="3" fill="#222"/><rect x="1552" y="2" width="3" height="5" fill="#f4f4f4" stroke="#111" stroke-width=".8"/><rect x="1560" y="2" width="3" height="5" fill="#f4f4f4" stroke="#111" stroke-width=".8"/><ellipse cx="1582" cy="6.5" rx="3.5" ry="5" fill="#f4f4f4" stroke="#111"/><path d="M1575 18C1575 13 1578 12 1582 12C1586 12 1589 13 1589 18Z" fill="#f4f4f4" stroke="#111"/><path d="M1678 12H1684L1681 15Z" fill="#f4f4f4"/><path d="M1695 4L1703 16M1703 4L1695 16" stroke="#1e3e8a" stroke-width="3.4"/><path d="M1695 4L1703 16M1703 4L1695 16" stroke="#6a90d8" stroke-width="1.4"/><path d="M1694 2H1698M1700 2H1704" stroke="#1e3e8a"/><path d="M1726 2V6M1721 14L1726 6L1731 14Z" fill="none" stroke="#1e3e8a" stroke-width="1.8"/><circle cx="1726" cy="2" r="1.5" fill="#eee" stroke="#1e3e8a"/><circle cx="1721" cy="14" r="2" fill="#eee" stroke="#1e3e8a"/><circle cx="1731" cy="14" r="2" fill="#eee" stroke="#1e3e8a"/><path d="M1739 12H1745L1742 15Z" fill="#f4f4f4"/><rect x="1754" y="2" width="1" height="20" fill="#a8a8a8" opacity=".6"/><circle cx="1772" cy="11.5" r="7.5" fill="#f8f8f8" stroke="#111" stroke-width="1.3"/><text x="1768" y="16" font-family="Liberation Sans" font-weight="bold" font-size="12" fill="#1e4a9a">?</text><path d="M1786 12H1792L1789 15Z" fill="#f4f4f4"/></svg>
<div class="a" style="left:0;top:985px;width:17px;height:25px;background:#3a3b3e"></div>
<svg style="left:0;top:985px" width="1858" height="25" shape-rendering="crispEdges"><rect x="17" y="0" width="1841" height="25" fill="#b4b4b4"/><rect x="1" y="0" width="1" height="25" fill="#bdbdc0"/><rect x="11" y="0" width="1" height="25" fill="#c9c9cc"/><rect x="20" y="0" width="1" height="25" fill="#bdbdc0"/><rect x="30" y="0" width="1" height="25" fill="#bdbdc0"/><rect x="40" y="0" width="1" height="25" fill="#bdbdc0"/><rect x="50" y="0" width="1" height="25" fill="#bdbdc0"/><rect x="59" y="0" width="1" height="25" fill="#c9c9cc"/><rect x="69" y="0" width="1" height="25" fill="#bdbdc0"/><rect x="79" y="0" width="1" height="25" fill="#bdbdc0"/><rect x="88" y="0" width="1" height="25" fill="#bdbdc0"/><rect x="98" y="0" width="1" height="25" fill="#bdbdc0"/><rect x="108" y="0" width="1" height="25" fill="#c9c9cc"/><rect x="118" y="0" width="1" height="25" fill="#bdbdc0"/><rect x="127" y="0" width="1" height="25" fill="#bdbdc0"/><rect x="137" y="0" width="1" height="25" fill="#bdbdc0"/><rect x="147" y="0" width="1" height="25" fill="#bdbdc0"/><rect x="156" y="0" width="1" height="25" fill="#c9c9cc"/><rect x="166" y="0" width="1" height="25" fill="#bdbdc0"/><rect x="176" y="0" width="1" height="25" fill="#bdbdc0"/><rect x="186" y="0" width="1" height="25" fill="#bdbdc0"/><rect x="195" y="0" width="1" height="25" fill="#bdbdc0"/><rect x="205" y="0" width="1" height="25" fill="#c9c9cc"/><rect x="215" y="0" width="1" height="25" fill="#bdbdc0"/><rect x="224" y="0" width="1" height="25" fill="#bdbdc0"/><rect x="234" y="0" width="1" height="25" fill="#bdbdc0"/><rect x="244" y="0" width="1" height="25" fill="#bdbdc0"/><rect x="254" y="0" width="1" height="25" fill="#c9c9cc"/><rect x="263" y="0" width="1" height="25" fill="#bdbdc0"/><rect x="273" y="0" width="1" height="25" fill="#bdbdc0"/><rect x="283" y="0" width="1" height="25" fill="#bdbdc0"/><rect x="292" y="0" width="1" height="25" fill="#bdbdc0"/><rect x="302" y="0" width="1" height="25" fill="#c9c9cc"/><rect x="312" y="0" width="1" height="25" fill="#bdbdc0"/><rect x="322" y="0" width="1" height="25" fill="#bdbdc0"/><rect x="331" y="0" width="1" height="25" fill="#bdbdc0"/><rect x="341" y="0" width="1" height="25" fill="#bdbdc0"/><rect x="351" y="0" width="1" height="25" fill="#c9c9cc"/><rect x="360" y="0" width="1" height="25" fill="#bdbdc0"/><rect x="370" y="0" width="1" height="25" fill="#bdbdc0"/><rect x="380" y="0" width="1" height="25" fill="#bdbdc0"/><rect x="390" y="0" width="1" height="25" fill="#bdbdc0"/><rect x="399" y="0" width="1" height="25" fill="#c9c9cc"/><rect x="409" y="0" width="1" height="25" fill="#bdbdc0"/><rect x="419" y="0" width="1" height="25" fill="#bdbdc0"/><rect x="428" y="0" width="1" height="25" fill="#bdbdc0"/><rect x="438" y="0" width="1" height="25" fill="#bdbdc0"/><rect x="448" y="0" width="1" height="25" fill="#c9c9cc"/><rect x="458" y="0" width="1" height="25" fill="#bdbdc0"/><rect x="467" y="0" width="1" height="25" fill="#bdbdc0"/><rect x="477" y="0" width="1" height="25" fill="#bdbdc0"/><rect x="487" y="0" width="1" height="25" fill="#bdbdc0"/><rect x="496" y="0" width="1" height="25" fill="#c9c9cc"/><rect x="506" y="0" width="1" height="25" fill="#bdbdc0"/><rect x="516" y="0" width="1" height="25" fill="#bdbdc0"/><rect x="525" y="0" width="1" height="25" fill="#bdbdc0"/><rect x="535" y="0" width="1" height="25" fill="#bdbdc0"/><rect x="545" y="0" width="1" height="25" fill="#c9c9cc"/><rect x="555" y="0" width="1" height="25" fill="#bdbdc0"/><rect x="564" y="0" width="1" height="25" fill="#bdbdc0"/><rect x="574" y="0" width="1" height="25" fill="#bdbdc0"/><rect x="584" y="0" width="1" height="25" fill="#bdbdc0"/><rect x="593" y="0" width="1" height="25" fill="#c9c9cc"/><rect x="603" y="0" width="1" height="25" fill="#bdbdc0"/><rect x="613" y="0" width="1" height="25" fill="#bdbdc0"/><rect x="623" y="0" width="1" height="25" fill="#bdbdc0"/><rect x="632" y="0" width="1" height="25" fill="#bdbdc0"/><rect x="642" y="0" width="1" height="25" fill="#c9c9cc"/><rect x="652" y="0" width="1" height="25" fill="#bdbdc0"/><rect x="661" y="0" width="1" height="25" fill="#bdbdc0"/><rect x="671" y="0" width="1" height="25" fill="#bdbdc0"/><rect x="681" y="0" width="1" height="25" fill="#bdbdc0"/><rect x="691" y="0" width="1" height="25" fill="#c9c9cc"/><rect x="700" y="0" width="1" height="25" fill="#bdbdc0"/><rect x="710" y="0" width="1" height="25" fill="#bdbdc0"/><rect x="720" y="0" width="1" height="25" fill="#bdbdc0"/><rect x="729" y="0" width="1" height="25" fill="#bdbdc0"/><rect x="739" y="0" width="1" height="25" fill="#c9c9cc"/><rect x="749" y="0" width="1" height="25" fill="#bdbdc0"/><rect x="759" y="0" width="1" height="25" fill="#bdbdc0"/><rect x="768" y="0" width="1" height="25" fill="#bdbdc0"/><rect x="778" y="0" width="1" height="25" fill="#bdbdc0"/><rect x="788" y="0" width="1" height="25" fill="#c9c9cc"/><rect x="797" y="0" width="1" height="25" fill="#bdbdc0"/><rect x="807" y="0" width="1" height="25" fill="#bdbdc0"/><rect x="817" y="0" width="1" height="25" fill="#bdbdc0"/><rect x="827" y="0" width="1" height="25" fill="#bdbdc0"/><rect x="836" y="0" width="1" height="25" fill="#c9c9cc"/><rect x="846" y="0" width="1" height="25" fill="#bdbdc0"/><rect x="856" y="0" width="1" height="25" fill="#bdbdc0"/><rect x="865" y="0" width="1" height="25" fill="#bdbdc0"/><rect x="875" y="0" width="1" height="25" fill="#bdbdc0"/><rect x="885" y="0" width="1" height="25" fill="#c9c9cc"/><rect x="895" y="0" width="1" height="25" fill="#bdbdc0"/><rect x="904" y="0" width="1" height="25" fill="#bdbdc0"/><rect x="914" y="0" width="1" height="25" fill="#bdbdc0"/><rect x="924" y="0" width="1" height="25" fill="#bdbdc0"/><rect x="933" y="0" width="1" height="25" fill="#c9c9cc"/><rect x="943" y="0" width="1" height="25" fill="#bdbdc0"/><rect x="953" y="0" width="1" height="25" fill="#bdbdc0"/><rect x="963" y="0" width="1" height="25" fill="#bdbdc0"/><rect x="972" y="0" width="1" height="25" fill="#bdbdc0"/><rect x="982" y="0" width="1" height="25" fill="#c9c9cc"/><rect x="992" y="0" width="1" height="25" fill="#bdbdc0"/><rect x="1001" y="0" width="1" height="25" fill="#bdbdc0"/><rect x="1011" y="0" width="1" height="25" fill="#bdbdc0"/><rect x="1021" y="0" width="1" height="25" fill="#bdbdc0"/><rect x="1031" y="0" width="1" height="25" fill="#c9c9cc"/><rect x="1040" y="0" width="1" height="25" fill="#bdbdc0"/><rect x="1050" y="0" width="1" height="25" fill="#bdbdc0"/><rect x="1060" y="0" width="1" height="25" fill="#bdbdc0"/><rect x="1069" y="0" width="1" height="25" fill="#bdbdc0"/><rect x="1079" y="0" width="1" height="25" fill="#c9c9cc"/><rect x="1089" y="0" width="1" height="25" fill="#bdbdc0"/><rect x="1099" y="0" width="1" height="25" fill="#bdbdc0"/><rect x="1108" y="0" width="1" height="25" fill="#bdbdc0"/><rect x="1118" y="0" width="1" height="25" fill="#bdbdc0"/><rect x="1128" y="0" width="1" height="25" fill="#c9c9cc"/><rect x="1137" y="0" width="1" height="25" fill="#bdbdc0"/><rect x="1147" y="0" width="1" height="25" fill="#bdbdc0"/><rect x="1157" y="0" width="1" height="25" fill="#bdbdc0"/><rect x="1166" y="0" width="1" height="25" fill="#bdbdc0"/><rect x="1176" y="0" width="1" height="25" fill="#c9c9cc"/><rect x="1186" y="0" width="1" height="25" fill="#bdbdc0"/><rect x="1196" y="0" width="1" height="25" fill="#bdbdc0"/><rect x="1205" y="0" width="1" height="25" fill="#bdbdc0"/><rect x="1215" y="0" width="1" height="25" fill="#bdbdc0"/><rect x="1225" y="0" width="1" height="25" fill="#c9c9cc"/><rect x="1234" y="0" width="1" height="25" fill="#bdbdc0"/><rect x="1244" y="0" width="1" height="25" fill="#bdbdc0"/><rect x="1254" y="0" width="1" height="25" fill="#bdbdc0"/><rect x="1264" y="0" width="1" height="25" fill="#bdbdc0"/><rect x="1273" y="0" width="1" height="25" fill="#c9c9cc"/><rect x="1283" y="0" width="1" height="25" fill="#bdbdc0"/><rect x="1293" y="0" width="1" height="25" fill="#bdbdc0"/><rect x="1302" y="0" width="1" height="25" fill="#bdbdc0"/><rect x="1312" y="0" width="1" height="25" fill="#bdbdc0"/><rect x="1322" y="0" width="1" height="25" fill="#c9c9cc"/><rect x="1332" y="0" width="1" height="25" fill="#bdbdc0"/><rect x="1341" y="0" width="1" height="25" fill="#bdbdc0"/><rect x="1351" y="0" width="1" height="25" fill="#bdbdc0"/><rect x="1361" y="0" width="1" height="25" fill="#bdbdc0"/><rect x="1370" y="0" width="1" height="25" fill="#c9c9cc"/><rect x="1380" y="0" width="1" height="25" fill="#bdbdc0"/><rect x="1390" y="0" width="1" height="25" fill="#bdbdc0"/><rect x="1400" y="0" width="1" height="25" fill="#bdbdc0"/><rect x="1409" y="0" width="1" height="25" fill="#bdbdc0"/><rect x="1419" y="0" width="1" height="25" fill="#c9c9cc"/><rect x="1429" y="0" width="1" height="25" fill="#bdbdc0"/><rect x="1438" y="0" width="1" height="25" fill="#bdbdc0"/><rect x="1448" y="0" width="1" height="25" fill="#bdbdc0"/><rect x="1458" y="0" width="1" height="25" fill="#bdbdc0"/><rect x="1468" y="0" width="1" height="25" fill="#c9c9cc"/><rect x="1477" y="0" width="1" height="25" fill="#bdbdc0"/><rect x="1487" y="0" width="1" height="25" fill="#bdbdc0"/><rect x="1497" y="0" width="1" height="25" fill="#bdbdc0"/><rect x="1506" y="0" width="1" height="25" fill="#bdbdc0"/><rect x="1516" y="0" width="1" height="25" fill="#c9c9cc"/><rect x="1526" y="0" width="1" height="25" fill="#bdbdc0"/><rect x="1536" y="0" width="1" height="25" fill="#bdbdc0"/><rect x="1545" y="0" width="1" height="25" fill="#bdbdc0"/><rect x="1555" y="0" width="1" height="25" fill="#bdbdc0"/><rect x="1565" y="0" width="1" height="25" fill="#c9c9cc"/><rect x="1574" y="0" width="1" height="25" fill="#bdbdc0"/><rect x="1584" y="0" width="1" height="25" fill="#bdbdc0"/><rect x="1594" y="0" width="1" height="25" fill="#bdbdc0"/><rect x="1604" y="0" width="1" height="25" fill="#bdbdc0"/><rect x="1613" y="0" width="1" height="25" fill="#c9c9cc"/><rect x="1623" y="0" width="1" height="25" fill="#bdbdc0"/><rect x="1633" y="0" width="1" height="25" fill="#bdbdc0"/><rect x="1642" y="0" width="1" height="25" fill="#bdbdc0"/><rect x="1652" y="0" width="1" height="25" fill="#bdbdc0"/><rect x="1662" y="0" width="1" height="25" fill="#c9c9cc"/><rect x="1672" y="0" width="1" height="25" fill="#bdbdc0"/><rect x="1681" y="0" width="1" height="25" fill="#bdbdc0"/><rect x="1691" y="0" width="1" height="25" fill="#bdbdc0"/><rect x="1701" y="0" width="1" height="25" fill="#bdbdc0"/><rect x="1710" y="0" width="1" height="25" fill="#c9c9cc"/><rect x="1720" y="0" width="1" height="25" fill="#bdbdc0"/><rect x="1730" y="0" width="1" height="25" fill="#bdbdc0"/><rect x="1739" y="0" width="1" height="25" fill="#bdbdc0"/><rect x="1749" y="0" width="1" height="25" fill="#bdbdc0"/><rect x="1759" y="0" width="1" height="25" fill="#c9c9cc"/><rect x="1769" y="0" width="1" height="25" fill="#bdbdc0"/><rect x="1778" y="0" width="1" height="25" fill="#bdbdc0"/><rect x="1788" y="0" width="1" height="25" fill="#bdbdc0"/><rect x="1798" y="0" width="1" height="25" fill="#bdbdc0"/><rect x="1807" y="0" width="1" height="25" fill="#c9c9cc"/><rect x="1817" y="0" width="1" height="25" fill="#bdbdc0"/><rect x="1827" y="0" width="1" height="25" fill="#bdbdc0"/><rect x="1837" y="0" width="1" height="25" fill="#bdbdc0"/><rect x="1846" y="0" width="1" height="25" fill="#bdbdc0"/><rect x="1856" y="0" width="1" height="25" fill="#c9c9cc"/><rect x="0" y="4" width="1858" height="1" fill="#bdbdc0"/><rect x="0" y="14" width="1858" height="1" fill="#bdbdc0"/><rect x="0" y="0" width="17" height="25" fill="#3a3b3e"/><rect x="11" y="0" width="1" height="25" fill="#4a4c52"/><rect x="17" y="0" width="1841" height="1" fill="#c4c4c4"/><rect x="17" y="24" width="1841" height="1" fill="#c6c6c6"/></svg>
<svg style="left:0;top:988px" width="16" height="18"><path d="M4 6L11 14" stroke="#d0d0d0" stroke-width="3"/><path d="M0.5 3.5C1 6 3 7.5 5.5 7C7.5 6.5 8 4 6.5 2L4.5 4L2.5 2.5" fill="none" stroke="#d0d0d0" stroke-width="1.8"/></svg>
<div class="a" style="left:22px;top:990px;width:15px;height:14px;border:1px solid #7a7a7a;border-radius:2px;background:#a9a9a9"></div>
<svg style="left:24px;top:992px" width="12" height="10"><path d="M1.5 1.5L5 4.5L1.5 7.5M6 8H10" stroke="#2a3040" stroke-width="1.2" fill="none"/></svg>
<svg style="left:40px;top:995px" width="6" height="4"><path d="M0 0H6L3 3.5Z" fill="#666"/></svg>
<div class="a" style="left:1858px;top:985px;width:36px;height:25px;background:#d4d4d4"></div>
<svg style="left:1862px;top:988px" width="30" height="18"><path d="M1 9H12M12 3V15M12 9L19 2V16Z" fill="#b0b0b0" stroke="#b0b0b0" stroke-width="2"/><path d="M21 15L24 12L27 15Z" fill="#111"/></svg>
<div class="a" style="left:1894px;top:985px;width:25px;height:25px;background:#444"></div>
<div class="a" style="left:0;top:1010px;width:1919px;height:31px;background:#3b3b3b"></div>
<svg style="left:0;top:1010px" width="240" height="22"><defs><linearGradient id="lt" x1="0" y1="0" x2="0" y2="1"><stop offset="0" stop-color="#5e5e5e"/><stop offset="1" stop-color="#4e4e4e"/></linearGradient></defs><path d="M2 0C8 0 10 3 12 9C14 16 16 18 21 18H60C64 18 66 16 67 10C68 3 69 0 71 0Z" fill="#6c6c6c"/><path d="M69 0C72 0 72 4 73 10C74 17 76 19 80 19H123C127 19 129 17 130 10C131 3 132 0 134 0Z" fill="url(#lt)"/><path d="M133 0C136 0 136 4 137 10C138 17 140 19 144 19H187C191 19 193 17 194 10C195 3 196 0 198 0Z" fill="url(#lt)"/><path d="M202 0C205 0 205 4 206 10C207 16 209 17 212 17C218 17 220 16 221 10C222 4 223 0 225 0Z" fill="#4e4e4e"/></svg>
<div class="t" style="left:22px;top:1013px;font-size:12px;font-weight:bold;color:#fff">Model</div>
<div class="t" style="left:80px;top:1013px;font-size:12px;color:#dcdcdc">Layout1</div>
<div class="t" style="left:145px;top:1013px;font-size:12px;color:#dcdcdc">Layout2</div>
<svg style="left:209px;top:1015px" width="8" height="8"><path d="M4 0V8M0 4H8" stroke="#bbb" stroke-width="2"/></svg>
<div class="a" style="left:1138px;top:1010px;width:781px;height:31px;background:#4b4b4b"></div>
<div class="a" style="left:1141px;top:1012px;width:201px;height:27px;background:#4b4b4b;border:1px dashed #7c7c7c"></div>
<div class="a" style="left:1345px;top:1012px;width:48px;height:27px;background:#4b4b4b;border:1px dashed #7c7c7c"></div>
<div class="a" style="left:1395px;top:1012px;width:65px;height:27px;background:#4b4b4b;border:1px dashed #7c7c7c"></div>
<div class="a" style="left:1462px;top:1012px;width:101px;height:27px;background:#4b4b4b;border:1px dashed #7c7c7c"></div>
<div class="a" style="left:1565px;top:1012px;width:63px;height:27px;background:#4b4b4b;border:1px dashed #7c7c7c"></div>
<div class="a" style="left:1630px;top:1012px;width:110px;height:27px;background:#4b4b4b;border:1px dashed #7c7c7c"></div>
<div class="a" style="left:1741px;top:1012px;width:65px;height:27px;background:#4b4b4b;border:1px dashed #7c7c7c"></div>
<div class="a" style="left:1808px;top:1012px;width:26px;height:27px;background:#4b4b4b;border:1px dashed #7c7c7c"></div>
<div class="a" style="left:1835px;top:1012px;width:32px;height:27px;background:#4b4b4b;border:1px dashed #7c7c7c"></div>
<div class="a" style="left:1868px;top:1012px;width:51px;height:27px;background:#4b4b4b;border:1px dashed #7c7c7c"></div>
<div class="t" style="left:1147px;top:1019px;font-size:12px;color:#f4f4f4">Drawing Scale = 1:1, Osnap = None</div>
<div class="t" style="left:1348px;top:1019px;font-size:12px;color:#f4f4f4">MODEL</div>
<div class="t" style="left:1707px;top:1019px;font-size:12px;color:#f4f4f4">1:1</div>
<svg style="left:0;top:0" width="1919" height="1043"><rect x="1400" y="1018" width="14" height="14" fill="#2d6fd8" opacity=".35"/><rect x="1401" y="1018" width="1.5" height="14" fill="#3b8cff"/><rect x="1404" y="1018" width="1.5" height="14" fill="#3b8cff"/><rect x="1407" y="1018" width="1.5" height="14" fill="#3b8cff"/><rect x="1410" y="1018" width="1.5" height="14" fill="#3b8cff"/><rect x="1413" y="1018" width="1.5" height="14" fill="#3b8cff"/><rect x="1400" y="1019" width="14" height="1" fill="#3b8cff"/><rect x="1400" y="1022" width="14" height="1" fill="#3b8cff"/><rect x="1400" y="1025" width="14" height="1" fill="#3b8cff"/><rect x="1400" y="1028" width="14" height="1" fill="#3b8cff"/><rect x="1400" y="1031" width="14" height="1" fill="#3b8cff"/><rect x="1424" y="1018" width="1" height="1" fill="#ccc"/><rect x="1424" y="1021" width="1" height="1" fill="#ccc"/><rect x="1424" y="1024" width="1" height="1" fill="#ccc"/><rect x="1424" y="1027" width="1" height="1" fill="#ccc"/><rect x="1424" y="1030" width="1" height="1" fill="#ccc"/><rect x="1427" y="1018" width="1" height="1" fill="#ccc"/><rect x="1427" y="1021" width="1" height="1" fill="#ccc"/><rect x="1427" y="1024" width="1" height="1" fill="#ccc"/><rect x="1427" y="1027" width="1" height="1" fill="#ccc"/><rect x="1427" y="1030" width="1" height="1" fill="#ccc"/><rect x="1430" y="1018" width="1" height="1" fill="#ccc"/><rect x="1430" y="1021" width="1" height="1" fill="#ccc"/><rect x="1430" y="1024" width="1" height="1" fill="#ccc"/><rect x="1430" y="1027" width="1" height="1" fill="#ccc"/><rect x="1430" y="1030" width="1" height="1" fill="#ccc"/><rect x="1433" y="1018" width="1" height="1" fill="#ccc"/><rect x="1433" y="1021" width="1" height="1" fill="#ccc"/><rect x="1433" y="1024" width="1" height="1" fill="#ccc"/><rect x="1433" y="1027" width="1" height="1" fill="#ccc"/><rect x="1433" y="1030" width="1" height="1" fill="#ccc"/><rect x="1436" y="1018" width="1" height="1" fill="#ccc"/><rect x="1436" y="1021" width="1" height="1" fill="#ccc"/><rect x="1436" y="1024" width="1" height="1" fill="#ccc"/><rect x="1436" y="1027" width="1" height="1" fill="#ccc"/><rect x="1436" y="1030" width="1" height="1" fill="#ccc"/><path d="M1446 1023H1454L1450 1027Z" fill="#eee"/><path d="M1513 1023H1521L1517 1027Z" fill="#eee"/><path d="M1552 1023H1560L1556 1027Z" fill="#eee"/><path d="M1616 1023H1624L1620 1027Z" fill="#eee"/><path d="M1729 1023H1737L1733 1027Z" fill="#eee"/><path d="M1771 1023H1779L1775 1027Z" fill="#eee"/><path d="M1468 1017V1032H1481M1471 1026V1029H1474" stroke="#ddd" stroke-width="1.3" fill="none"/><circle cx="1497" cy="1025" r="6" fill="none" stroke="#ccc" stroke-width="1.5"/><path d="M1497 1025L1504 1018M1497 1025H1503" stroke="#ccc" stroke-width="1.3"/><path d="M1530 1017L1544 1033M1537 1016V1034M1530 1033L1544 1017" stroke="#aaa" stroke-width="1.2"/><path d="M1567 1032L1581 1018M1567 1032H1582M1571 1026L1576 1030" stroke="#3b8cff" stroke-width="1.6" fill="none"/><rect x="1594" y="1018" width="13" height="13" fill="none" stroke="#ddd" stroke-width="1.4"/><rect x="1593" y="1016" width="3" height="3" fill="#11dd11"/><path d="M1636 1033L1643 1018L1650 1033M1643 1018V1028" stroke="#3b8cff" stroke-width="2.4" fill="none"/><circle cx="1647" cy="1021" r="3" fill="none" stroke="#3b8cff" stroke-width="1.5"/><path d="M1659 1033L1666 1018L1673 1033M1666 1018V1028" stroke="#bbb" stroke-width="2.2" fill="none"/><path d="M1683 1033L1690 1018L1697 1033M1690 1018V1028" stroke="#bbb" stroke-width="2.2" fill="none"/><circle cx="1753" cy="1025" r="5" fill="#aaa"/><circle cx="1753" cy="1025" r="2" fill="#4b4b4b"/><path d="M1753 1018V1032M1746 1025H1760M1748 1020L1758 1030M1758 1020L1748 1030" stroke="#aaa" stroke-width="2"/><path d="M1793.5 1018V1032M1786.5 1025H1800.5" stroke="#eee" stroke-width="1.8"/><circle cx="1821" cy="1025" r="8.5" fill="#1a4fb8"/><circle cx="1821" cy="1025" r="7.8" fill="none" stroke="#3b8cff" stroke-width="1.4"/><path d="M1817 1027L1819 1029L1825 1022" stroke="#7fb4ff" stroke-width="1.2" fill="none"/><rect x="1843" y="1017" width="7" height="7" fill="none" stroke="#ccc"/><circle cx="1855" cy="1024" r="3.5" fill="none" stroke="#ccc"/><path d="M1850 1026L1846 1033H1854Z" fill="none" stroke="#ccc"/><rect x="1873" y="1018" width="15" height="13" fill="none" stroke="#ccc" stroke-width="1.4"/><path d="M1876 1028L1885 1021M1882 1021H1885V1024M1876 1025V1028H1879" stroke="#ccc" stroke-width="1.2" fill="none"/><path d="M1898 1019.5H1913M1898 1025H1913M1898 1030.5H1913" stroke="#e0e0e0" stroke-width="1.8"/></svg>
<div class="a" style="left:0;top:1041px;width:1919px;height:2px;background:linear-gradient(90deg,#2a6fc0,#3b7fd0 20%,#2a6ab8 60%,#3377c8)"></div>
<div class="a" style="left:245px;top:1041px;width:58px;height:2px;background:#f0f0f0"></div>
</body></html>
